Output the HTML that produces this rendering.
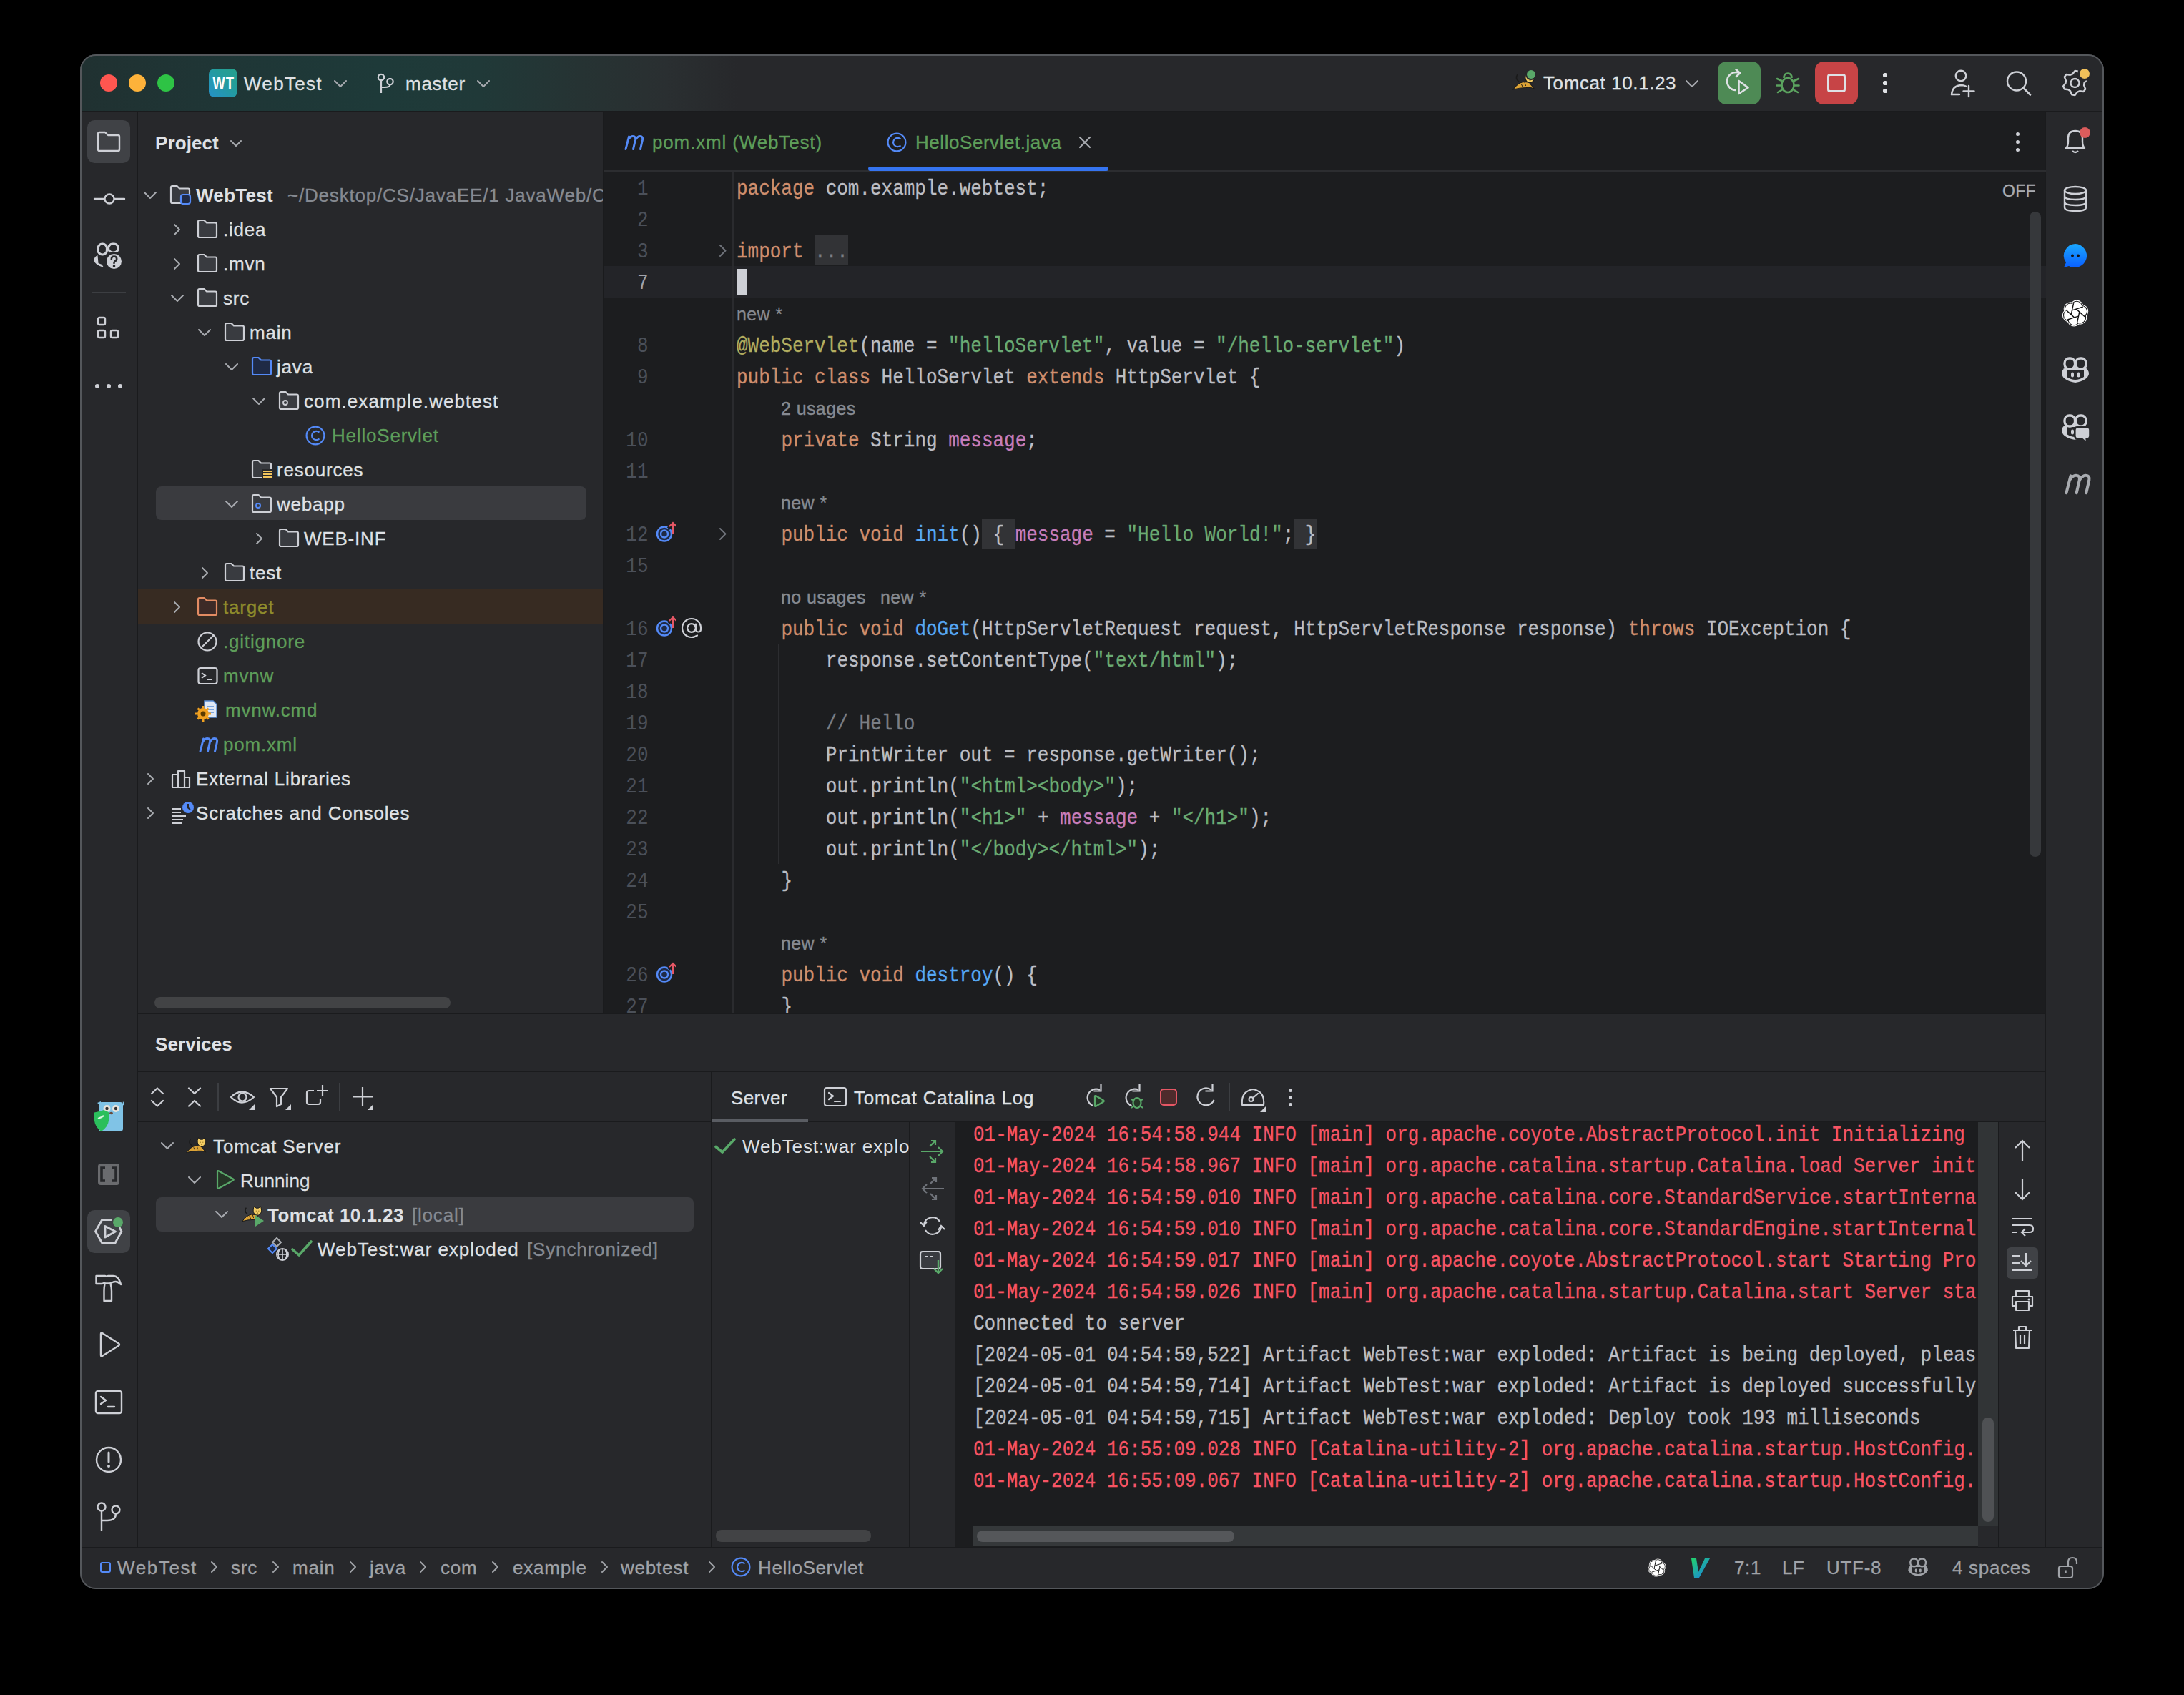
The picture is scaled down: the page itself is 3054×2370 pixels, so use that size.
<!DOCTYPE html><html><head><meta charset="utf-8"><style>
html,body{margin:0;padding:0;background:#000;width:3054px;height:2370px;overflow:hidden}
#r{position:absolute;left:0;top:0;width:3054px;height:2370px;background:#000;overflow:hidden}
#r div{position:absolute}
.t{white-space:pre}
</style></head><body><div id="r">
<div id="w" style="left:0;top:0;width:3054px;height:2370px;clip-path:inset(76px 112px 148px 112px round 22px)">
<div style="left:112px;top:76px;width:2830px;height:2146px;background:#27282b;"></div>
<div style="left:112px;top:76px;width:2830px;height:80px;background:linear-gradient(90deg,#203131 0px,#1f3636 200px,#1e3a39 420px,#203938 560px,#263333 700px,#2a2f31 820px,#27282b 920px);"></div>
<div style="left:844px;top:156px;width:2017px;height:1262px;background:#1c1d1f;"></div>
<div style="left:192px;top:156px;width:1px;height:2007px;background:#1a1b1d;"></div>
<div style="left:843px;top:156px;width:1px;height:1262px;background:#1a1b1d;"></div>
<div style="left:2860px;top:156px;width:1px;height:2007px;background:#1a1b1d;"></div>
<div style="left:193px;top:1417px;width:2667px;height:1px;background:#1a1b1d;"></div>
<div style="left:112px;top:2163px;width:2830px;height:1px;background:#1a1b1d;"></div>
<div style="left:112px;top:155px;width:2830px;height:2px;background:#1a1b1d;"></div>
<div style="left:140px;top:104px;width:24px;height:24px;border-radius:50%;background:#fe5650"></div>
<div style="left:180px;top:104px;width:24px;height:24px;border-radius:50%;background:#fdb23a"></div>
<div style="left:220px;top:104px;width:24px;height:24px;border-radius:50%;background:#2ec345"></div>
<div style="left:292px;top:96px;width:40px;height:40px;background:linear-gradient(45deg,#2591c9 0%,#239c9c 60%,#25a08a 100%);border-radius:8px"></div>
<div class="t" style="left:292px;top:96px;width:40px;height:40px;line-height:41px;text-align:center;font-family:'Liberation Sans';font-weight:700;font-size:25px;color:#fff;transform:scaleX(0.74);letter-spacing:1.5px">WT</div>
<div class="t" style="left:341px;top:103.99px;font-family:'Liberation Sans', sans-serif;font-size:26px;line-height:26px;color:#dfe1e5;font-weight:400;letter-spacing:1.3px;;-webkit-text-stroke:0.3px currentColor">WebTest</div>
<svg style="position:absolute;left:466.0px;top:111.0px;" width="20" height="12.0" viewBox="0 0 20 12.0" fill="none"><path d="M2 2 L10.0 10.0 L18 2" stroke="#a8abb0" stroke-width="2" stroke-linecap="round" stroke-linejoin="round"/></svg>
<svg style="position:absolute;left:524px;top:98px;" width="30" height="40" viewBox="0 0 30 40" fill="none"><circle cx="9" cy="10" r="4.2" stroke="#ced0d6" stroke-width="2.2"/><circle cx="21.5" cy="16" r="4.2" stroke="#ced0d6" stroke-width="2.2"/><path d="M9 14.2 V32 M9 24 H14 Q21.5 24 21.5 20.2" stroke="#ced0d6" stroke-width="2.2" fill="none"/></svg>
<div class="t" style="left:567px;top:103.99px;font-family:'Liberation Sans', sans-serif;font-size:26px;line-height:26px;color:#dfe1e5;font-weight:400;letter-spacing:0.75px;;-webkit-text-stroke:0.3px currentColor">master</div>
<svg style="position:absolute;left:666.0px;top:111.0px;" width="20" height="12.0" viewBox="0 0 20 12.0" fill="none"><path d="M2 2 L10.0 10.0 L18 2" stroke="#a8abb0" stroke-width="2" stroke-linecap="round" stroke-linejoin="round"/></svg>
<svg style="position:absolute;left:2115px;top:101px;transform:scale(1.0);transform-origin:0 0" width="32" height="26" viewBox="0 0 32 26" fill="none"><path d="M9 13 Q3 9 7 3" stroke="#1a1a1a" stroke-width="1.6" fill="none"/><path d="M1 24 Q7 15 15 13.5 L23 14 Q27 19 31 23.5 Q25 20.5 19 21.5 Q10 21.5 1 24 Z" fill="#dca336" stroke="#1a1a1a" stroke-width="1.1"/><path d="M12 16 L14 20 M17 14 L18.5 19" stroke="#1a1a1a" stroke-width="1"/><path d="M18 5 L19 1 L22.5 3.5 H26 L29.5 1 L30.5 5 Q32 11 26 14.5 Q20.5 15 18.8 11 Q17.5 8 18 5 Z" fill="#f2cc64" stroke="#1a1a1a" stroke-width="1.1"/><path d="M22 8 H23 M26 8 H27 M23.5 11 Q24.5 12 25.5 11" stroke="#5a4000" stroke-width="1"/></svg>
<div style="left:2133px;top:96px;width:16px;height:16px;border-radius:50%;background:#27282b"></div>
<div style="left:2135px;top:98px;width:12px;height:12px;border-radius:50%;background:#59a869"></div>
<div class="t" style="left:2158px;top:102.99px;font-family:'Liberation Sans', sans-serif;font-size:26px;line-height:26px;color:#dfe1e5;font-weight:400;letter-spacing:0.6px;;-webkit-text-stroke:0.3px currentColor">Tomcat 10.1.23</div>
<svg style="position:absolute;left:2356.0px;top:111.0px;" width="20" height="12.0" viewBox="0 0 20 12.0" fill="none"><path d="M2 2 L10.0 10.0 L18 2" stroke="#a8abb0" stroke-width="2" stroke-linecap="round" stroke-linejoin="round"/></svg>
<div style="left:2402px;top:86px;width:60px;height:60px;background:#4e8a55;border-radius:12px"></div>
<svg style="position:absolute;left:2412px;top:96px;" width="40" height="40" viewBox="0 0 40 40" fill="none"><path d="M19.8 5.75 A12.5 12.5 0 1 0 14.4 29.95" stroke="#dfe1e5" stroke-width="2.6" fill="none" stroke-linecap="round"/><path d="M15.5 1 L21 6 L16 11" stroke="#dfe1e5" stroke-width="2.6" fill="none" stroke-linecap="round" stroke-linejoin="round"/><path d="M19.5 17 L32.5 26.5 L19.5 35 Z" stroke="#dfe1e5" stroke-width="2.6" fill="none" stroke-linejoin="round"/></svg>
<svg style="position:absolute;left:2482px;top:96px;" width="36" height="40" viewBox="0 0 36 40" fill="none"><ellipse cx="18" cy="23" rx="8.5" ry="10" stroke="#5ba35f" stroke-width="2.6"/><path d="M12.5 13 Q12.5 6.5 18 6.5 Q23.5 6.5 23.5 13" stroke="#5ba35f" stroke-width="2.6" fill="none"/><path d="M3 14 L9.5 17 M33 14 L26.5 17 M2.5 23.5 H9.5 M33.5 23.5 H26.5 M4 33 L10 29.5 M32 33 L26 29.5" stroke="#5ba35f" stroke-width="2.6" stroke-linecap="round"/></svg>
<div style="left:2538px;top:86px;width:60px;height:60px;background:#c74446;border-radius:12px"></div>
<div style="left:2555px;top:103px;width:26px;height:26px;background:transparent;border:3px solid #dfe1e5;border-radius:4px;box-sizing:border-box"></div>
<div style="left:2633.4px;top:102.4px;width:5.2px;height:5.2px;border-radius:50%;background:#dfe1e5"></div>
<div style="left:2633.4px;top:113.4px;width:5.2px;height:5.2px;border-radius:50%;background:#dfe1e5"></div>
<div style="left:2633.4px;top:124.4px;width:5.2px;height:5.2px;border-radius:50%;background:#dfe1e5"></div>
<svg style="position:absolute;left:2722px;top:93px;" width="40" height="44" viewBox="0 0 40 44" fill="none"><circle cx="20" cy="13" r="7.2" stroke="#ced0d6" stroke-width="2.4"/><path d="M7 39 Q8 27 20 26 Q24 26 27 27.5" stroke="#ced0d6" stroke-width="2.4" fill="none" stroke-linecap="round"/><path d="M7 39 H18 M31 27 V42 M23.5 34.5 H38.5" stroke="#ced0d6" stroke-width="2.4" stroke-linecap="round"/></svg>
<svg style="position:absolute;left:2800px;top:93px;" width="44" height="44" viewBox="0 0 44 44" fill="none"><circle cx="20" cy="20.5" r="13" stroke="#ced0d6" stroke-width="2.4"/><path d="M29.5 30 L39 39.5" stroke="#ced0d6" stroke-width="2.6" stroke-linecap="round"/></svg>
<svg style="position:absolute;left:2880px;top:95px;" width="44" height="44" viewBox="0 0 44 44" fill="none"><path d="M21.5 4.0 L25.9 4.6 L28.0 9.7 L30.7 11.8 L36.2 12.5 L37.9 16.6 L34.5 21.0 L34.1 24.4 L36.2 29.5 L33.5 33.0 L28.0 32.3 L24.9 33.6 L21.5 38.0 L17.1 37.4 L15.0 32.3 L12.3 30.2 L6.8 29.5 L5.1 25.4 L8.5 21.0 L8.9 17.6 L6.8 12.5 L9.5 9.0 L15.0 9.7 L18.1 8.4 Z" stroke="#ced0d6" stroke-width="2.4" stroke-linejoin="round"/><circle cx="21.5" cy="21" r="6" stroke="#ced0d6" stroke-width="2.4"/></svg>
<div style="left:2905px;top:93px;width:20px;height:20px;border-radius:50%;background:#27282b"></div>
<div style="left:2908px;top:96px;width:14px;height:14px;border-radius:50%;background:#f0c05a"></div>
<div style="left:122px;top:168px;width:60px;height:60px;background:#404246;border-radius:10px"></div>
<svg style="position:absolute;left:134px;top:182px;" width="36" height="32" viewBox="0 0 36 32" fill="none"><path d="M3 5 Q3 3 5 3 H13 L17 7 H31 Q33 7 33 9 V27 Q33 29 31 29 H5 Q3 29 3 27 Z" stroke="#ced0d6" stroke-width="2.4" stroke-linejoin="round"/></svg>
<svg style="position:absolute;left:130px;top:266px;" width="46" height="24" viewBox="0 0 46 24" fill="none"><circle cx="23" cy="12" r="6.5" stroke="#ced0d6" stroke-width="2.4"/><path d="M2 12 H16 M30 12 H44" stroke="#ced0d6" stroke-width="2.4" stroke-linecap="round"/></svg>
<svg style="position:absolute;left:130px;top:336px;" width="42" height="42" viewBox="0 0 42 42" fill="none"><rect x="7" y="5" width="12.5" height="15" rx="6" stroke="#ced0d6" stroke-width="3.2"/><rect x="21.5" y="5" width="14" height="12" rx="6" stroke="#ced0d6" stroke-width="3.2"/><path d="M6.5 21 Q1.5 23 1.5 28 Q2 34 15 38 L12.5 34 L7.5 32 Z" fill="#ced0d6"/><circle cx="29.5" cy="29.5" r="13.5" fill="#27282b"/><circle cx="29.5" cy="29.5" r="10.5" fill="#ced0d6"/><path d="M25.8 26.5 Q25.8 22.5 29.5 22.5 Q33.2 22.5 33.2 26 Q33.2 28 30.5 29.5 Q29.5 30.2 29.5 32" stroke="#27282b" stroke-width="2.6" fill="none" stroke-linecap="round"/><circle cx="29.5" cy="36" r="1.8" fill="#27282b"/></svg>
<div style="left:128px;top:408px;width:48px;height:2px;background:#3c3e42;"></div>
<svg style="position:absolute;left:132px;top:440px;" width="40" height="40" viewBox="0 0 40 40" fill="none"><rect x="5" y="4" width="10" height="10" rx="2" stroke="#ced0d6" stroke-width="2.4"/><rect x="5" y="22" width="10" height="10" rx="2" stroke="#ced0d6" stroke-width="2.4"/><rect x="23" y="22" width="10" height="10" rx="2" stroke="#ced0d6" stroke-width="2.4"/></svg>
<div style="left:133px;top:537px;width:6px;height:6px;border-radius:50%;background:#ced0d6"></div>
<div style="left:149px;top:537px;width:6px;height:6px;border-radius:50%;background:#ced0d6"></div>
<div style="left:165px;top:537px;width:6px;height:6px;border-radius:50%;background:#ced0d6"></div>
<div class="t" style="left:217px;top:186.99px;font-family:'Liberation Sans', sans-serif;font-size:26px;line-height:26px;color:#dfe1e5;font-weight:700;letter-spacing:0.1px;">Project</div>
<svg style="position:absolute;left:321.0px;top:194.5px;" width="18" height="11.0" viewBox="0 0 18 11.0" fill="none"><path d="M2 2 L9.0 9.0 L16 2" stroke="#a8abb0" stroke-width="2" stroke-linecap="round" stroke-linejoin="round"/></svg>
<div style="left:218px;top:680px;width:602px;height:47px;background:#3a3b3f;border-radius:8px"></div>
<div style="left:193px;top:824px;width:650px;height:48px;background:#372b22;"></div>
<svg style="position:absolute;left:200.0px;top:267.0px;" width="20" height="12.0" viewBox="0 0 20 12.0" fill="none"><path d="M2 2 L10.0 10.0 L18 2" stroke="#a8abb0" stroke-width="2" stroke-linecap="round" stroke-linejoin="round"/></svg>
<svg style="position:absolute;left:236px;top:257px;" width="32" height="30" viewBox="0 0 32 30" fill="none"><path d="M3 5 Q3 3 5 3 H11.5 L15 6.5 H27 Q29 6.5 29 8.5 V25 Q29 27 27 27 H5 Q3 27 3 25 Z" fill="#393b40" stroke="#ced0d6" stroke-width="2.2" stroke-linejoin="round"/><rect x="17" y="15" width="13" height="13" rx="3" fill="#1f2a45" stroke="#548af7" stroke-width="2.2"/></svg>
<div class="t" style="left:274px;top:259.99px;font-family:'Liberation Sans', sans-serif;font-size:26px;line-height:26px;color:#dfe1e5;font-weight:700;letter-spacing:0.3px;">WebTest</div>
<div style="left:400px;top:250px;width:443px;height:48px;overflow:hidden">
<div class="t" style="left:2px;top:9.99px;font-family:'Liberation Sans', sans-serif;font-size:26px;line-height:26px;color:#868a91;font-weight:400;letter-spacing:0.8px;;-webkit-text-stroke:0.3px currentColor">~/Desktop/CS/JavaEE/1 JavaWeb/C</div>
</div>
<svg style="position:absolute;left:241.5px;top:312.0px;" width="11.0" height="18" viewBox="0 0 11.0 18" fill="none"><path d="M2 2 L9.0 9.0 L2 16" stroke="#a8abb0" stroke-width="2" stroke-linecap="round" stroke-linejoin="round"/></svg>
<svg style="position:absolute;left:274px;top:305px;" width="32" height="30" viewBox="0 0 32 30" fill="none"><path d="M3 5 Q3 3 5 3 H11.5 L15 6.5 H27 Q29 6.5 29 8.5 V25 Q29 27 27 27 H5 Q3 27 3 25 Z" fill="#393b40" stroke="#ced0d6" stroke-width="2.2" stroke-linejoin="round"/></svg>
<div class="t" style="left:312px;top:307.99px;font-family:'Liberation Sans', sans-serif;font-size:26px;line-height:26px;color:#dfe1e5;font-weight:400;letter-spacing:0.8px;;-webkit-text-stroke:0.3px currentColor">.idea</div>
<svg style="position:absolute;left:241.5px;top:360.0px;" width="11.0" height="18" viewBox="0 0 11.0 18" fill="none"><path d="M2 2 L9.0 9.0 L2 16" stroke="#a8abb0" stroke-width="2" stroke-linecap="round" stroke-linejoin="round"/></svg>
<svg style="position:absolute;left:274px;top:353px;" width="32" height="30" viewBox="0 0 32 30" fill="none"><path d="M3 5 Q3 3 5 3 H11.5 L15 6.5 H27 Q29 6.5 29 8.5 V25 Q29 27 27 27 H5 Q3 27 3 25 Z" fill="#393b40" stroke="#ced0d6" stroke-width="2.2" stroke-linejoin="round"/></svg>
<div class="t" style="left:312px;top:355.99px;font-family:'Liberation Sans', sans-serif;font-size:26px;line-height:26px;color:#dfe1e5;font-weight:400;letter-spacing:0.8px;;-webkit-text-stroke:0.3px currentColor">.mvn</div>
<svg style="position:absolute;left:238.0px;top:411.0px;" width="20" height="12.0" viewBox="0 0 20 12.0" fill="none"><path d="M2 2 L10.0 10.0 L18 2" stroke="#a8abb0" stroke-width="2" stroke-linecap="round" stroke-linejoin="round"/></svg>
<svg style="position:absolute;left:274px;top:401px;" width="32" height="30" viewBox="0 0 32 30" fill="none"><path d="M3 5 Q3 3 5 3 H11.5 L15 6.5 H27 Q29 6.5 29 8.5 V25 Q29 27 27 27 H5 Q3 27 3 25 Z" fill="#393b40" stroke="#ced0d6" stroke-width="2.2" stroke-linejoin="round"/></svg>
<div class="t" style="left:312px;top:403.99px;font-family:'Liberation Sans', sans-serif;font-size:26px;line-height:26px;color:#dfe1e5;font-weight:400;letter-spacing:0.8px;;-webkit-text-stroke:0.3px currentColor">src</div>
<svg style="position:absolute;left:276.0px;top:459.0px;" width="20" height="12.0" viewBox="0 0 20 12.0" fill="none"><path d="M2 2 L10.0 10.0 L18 2" stroke="#a8abb0" stroke-width="2" stroke-linecap="round" stroke-linejoin="round"/></svg>
<svg style="position:absolute;left:312px;top:449px;" width="32" height="30" viewBox="0 0 32 30" fill="none"><path d="M3 5 Q3 3 5 3 H11.5 L15 6.5 H27 Q29 6.5 29 8.5 V25 Q29 27 27 27 H5 Q3 27 3 25 Z" fill="#393b40" stroke="#ced0d6" stroke-width="2.2" stroke-linejoin="round"/></svg>
<div class="t" style="left:349px;top:451.99px;font-family:'Liberation Sans', sans-serif;font-size:26px;line-height:26px;color:#dfe1e5;font-weight:400;letter-spacing:0.8px;;-webkit-text-stroke:0.3px currentColor">main</div>
<svg style="position:absolute;left:314.0px;top:507.0px;" width="20" height="12.0" viewBox="0 0 20 12.0" fill="none"><path d="M2 2 L10.0 10.0 L18 2" stroke="#a8abb0" stroke-width="2" stroke-linecap="round" stroke-linejoin="round"/></svg>
<svg style="position:absolute;left:350px;top:497px;" width="32" height="30" viewBox="0 0 32 30" fill="none"><path d="M3 5 Q3 3 5 3 H11.5 L15 6.5 H27 Q29 6.5 29 8.5 V25 Q29 27 27 27 H5 Q3 27 3 25 Z" fill="#1f2a45" stroke="#548af7" stroke-width="2.2" stroke-linejoin="round"/></svg>
<div class="t" style="left:387px;top:499.99px;font-family:'Liberation Sans', sans-serif;font-size:26px;line-height:26px;color:#dfe1e5;font-weight:400;letter-spacing:0.8px;;-webkit-text-stroke:0.3px currentColor">java</div>
<svg style="position:absolute;left:352.0px;top:555.0px;" width="20" height="12.0" viewBox="0 0 20 12.0" fill="none"><path d="M2 2 L10.0 10.0 L18 2" stroke="#a8abb0" stroke-width="2" stroke-linecap="round" stroke-linejoin="round"/></svg>
<svg style="position:absolute;left:388px;top:545px;" width="32" height="30" viewBox="0 0 32 30" fill="none"><path d="M3 5 Q3 3 5 3 H11.5 L15 6.5 H27 Q29 6.5 29 8.5 V25 Q29 27 27 27 H5 Q3 27 3 25 Z" fill="#393b40" stroke="#ced0d6" stroke-width="2.2" stroke-linejoin="round"/><circle cx="11" cy="18" r="3" stroke="#ced0d6" stroke-width="1.8"/></svg>
<div class="t" style="left:425px;top:547.99px;font-family:'Liberation Sans', sans-serif;font-size:26px;line-height:26px;color:#dfe1e5;font-weight:400;letter-spacing:1.1px;;-webkit-text-stroke:0.3px currentColor">com.example.webtest</div>
<svg style="position:absolute;left:427px;top:595.0px;" width="28" height="28" viewBox="0 0 28 28" fill="none"><circle cx="14.0" cy="14.0" r="12.4" stroke="#548af7" stroke-width="2.2"/><path d="M19.5 9.5 A6.2 6.2 0 1 0 19.5 18.5" stroke="#548af7" stroke-width="2.2" fill="none"/></svg>
<div class="t" style="left:464px;top:595.99px;font-family:'Liberation Sans', sans-serif;font-size:26px;line-height:26px;color:#5e9e5a;font-weight:400;letter-spacing:0.8px;;-webkit-text-stroke:0.3px currentColor">HelloServlet</div>
<svg style="position:absolute;left:350px;top:641px;" width="32" height="30" viewBox="0 0 32 30" fill="none"><path d="M3 5 Q3 3 5 3 H11.5 L15 6.5 H27 Q29 6.5 29 8.5 V25 Q29 27 27 27 H5 Q3 27 3 25 Z" fill="#393b40" stroke="#ced0d6" stroke-width="2.2" stroke-linejoin="round"/><rect x="16" y="15" width="15" height="13" fill="#27282b"/><path d="M18 18 H30 M18 22 H30 M18 26 H30" stroke="#f2c55c" stroke-width="2"/></svg>
<div class="t" style="left:387px;top:643.99px;font-family:'Liberation Sans', sans-serif;font-size:26px;line-height:26px;color:#dfe1e5;font-weight:400;letter-spacing:0.8px;;-webkit-text-stroke:0.3px currentColor">resources</div>
<svg style="position:absolute;left:314.0px;top:699.0px;" width="20" height="12.0" viewBox="0 0 20 12.0" fill="none"><path d="M2 2 L10.0 10.0 L18 2" stroke="#a8abb0" stroke-width="2" stroke-linecap="round" stroke-linejoin="round"/></svg>
<svg style="position:absolute;left:350px;top:689px;" width="32" height="30" viewBox="0 0 32 30" fill="none"><path d="M3 5 Q3 3 5 3 H11.5 L15 6.5 H27 Q29 6.5 29 8.5 V25 Q29 27 27 27 H5 Q3 27 3 25 Z" fill="#393b40" stroke="#ced0d6" stroke-width="2.2" stroke-linejoin="round"/><circle cx="11" cy="18" r="3" stroke="#548af7" stroke-width="2"/></svg>
<div class="t" style="left:387px;top:691.99px;font-family:'Liberation Sans', sans-serif;font-size:26px;line-height:26px;color:#dfe1e5;font-weight:400;letter-spacing:0.8px;;-webkit-text-stroke:0.3px currentColor">webapp</div>
<svg style="position:absolute;left:356.5px;top:744.0px;" width="11.0" height="18" viewBox="0 0 11.0 18" fill="none"><path d="M2 2 L9.0 9.0 L2 16" stroke="#a8abb0" stroke-width="2" stroke-linecap="round" stroke-linejoin="round"/></svg>
<svg style="position:absolute;left:388px;top:737px;" width="32" height="30" viewBox="0 0 32 30" fill="none"><path d="M3 5 Q3 3 5 3 H11.5 L15 6.5 H27 Q29 6.5 29 8.5 V25 Q29 27 27 27 H5 Q3 27 3 25 Z" fill="#393b40" stroke="#ced0d6" stroke-width="2.2" stroke-linejoin="round"/></svg>
<div class="t" style="left:425px;top:739.99px;font-family:'Liberation Sans', sans-serif;font-size:26px;line-height:26px;color:#dfe1e5;font-weight:400;letter-spacing:0.8px;;-webkit-text-stroke:0.3px currentColor">WEB-INF</div>
<svg style="position:absolute;left:280.5px;top:792.0px;" width="11.0" height="18" viewBox="0 0 11.0 18" fill="none"><path d="M2 2 L9.0 9.0 L2 16" stroke="#a8abb0" stroke-width="2" stroke-linecap="round" stroke-linejoin="round"/></svg>
<svg style="position:absolute;left:312px;top:785px;" width="32" height="30" viewBox="0 0 32 30" fill="none"><path d="M3 5 Q3 3 5 3 H11.5 L15 6.5 H27 Q29 6.5 29 8.5 V25 Q29 27 27 27 H5 Q3 27 3 25 Z" fill="#393b40" stroke="#ced0d6" stroke-width="2.2" stroke-linejoin="round"/></svg>
<div class="t" style="left:349px;top:787.99px;font-family:'Liberation Sans', sans-serif;font-size:26px;line-height:26px;color:#dfe1e5;font-weight:400;letter-spacing:0.8px;;-webkit-text-stroke:0.3px currentColor">test</div>
<svg style="position:absolute;left:241.5px;top:840.0px;" width="11.0" height="18" viewBox="0 0 11.0 18" fill="none"><path d="M2 2 L9.0 9.0 L2 16" stroke="#a8abb0" stroke-width="2" stroke-linecap="round" stroke-linejoin="round"/></svg>
<svg style="position:absolute;left:274px;top:833px;" width="32" height="30" viewBox="0 0 32 30" fill="none"><path d="M3 5 Q3 3 5 3 H11.5 L15 6.5 H27 Q29 6.5 29 8.5 V25 Q29 27 27 27 H5 Q3 27 3 25 Z" fill="#3d2a27" stroke="#e38c63" stroke-width="2.2" stroke-linejoin="round"/></svg>
<div class="t" style="left:312px;top:835.99px;font-family:'Liberation Sans', sans-serif;font-size:26px;line-height:26px;color:#8f8c2c;font-weight:400;letter-spacing:0.8px;;-webkit-text-stroke:0.3px currentColor">target</div>
<svg style="position:absolute;left:275px;top:882px;" width="30" height="30" viewBox="0 0 30 30" fill="none"><circle cx="15" cy="15" r="12.5" stroke="#ced0d6" stroke-width="2.2"/><path d="M6.5 23.5 L23.5 6.5" stroke="#ced0d6" stroke-width="2.2"/></svg>
<div class="t" style="left:312px;top:883.99px;font-family:'Liberation Sans', sans-serif;font-size:26px;line-height:26px;color:#5e9e5a;font-weight:400;letter-spacing:0.8px;;-webkit-text-stroke:0.3px currentColor">.gitignore</div>
<svg style="position:absolute;left:275px;top:930px;" width="30" height="30" viewBox="0 0 30 30" fill="none"><rect x="2.5" y="4" width="26" height="22" rx="3" stroke="#ced0d6" stroke-width="2.2"/><path d="M7 11 L12 14.5 L7 18 M14 20 H22" stroke="#ced0d6" stroke-width="2"/></svg>
<div class="t" style="left:312px;top:931.99px;font-family:'Liberation Sans', sans-serif;font-size:26px;line-height:26px;color:#5e9e5a;font-weight:400;letter-spacing:0.8px;;-webkit-text-stroke:0.3px currentColor">mvnw</div>
<svg style="position:absolute;left:272px;top:976px;" width="34" height="34" viewBox="0 0 34 34" fill="none"><path d="M14 4 H26 L31 9 V27 H14 Z" fill="#dfe8f5" stroke="#5a8fd8" stroke-width="1.5"/><path d="M17 12 H27 M17 16 H27 M17 20 H27" stroke="#5a8fd8" stroke-width="1.5"/><circle cx="12" cy="22" r="8" fill="#f0a020"/><circle cx="12" cy="22" r="3.5" fill="#5a3b00"/><path d="M12 11 V14 M12 30 V33 M1 22 H4 M20 22 H23 M4.5 14.5 L6.5 16.5 M17.5 27.5 L19.5 29.5 M4.5 29.5 L6.5 27.5 M17.5 16.5 L19.5 14.5" stroke="#f0a020" stroke-width="3"/></svg>
<div class="t" style="left:315px;top:979.99px;font-family:'Liberation Sans', sans-serif;font-size:26px;line-height:26px;color:#5e9e5a;font-weight:400;letter-spacing:0.8px;;-webkit-text-stroke:0.3px currentColor">mvnw.cmd</div>
<svg style="position:absolute;left:276px;top:1029.0px;" width="32.0" height="24.0" viewBox="0 0 32 24" fill="none"><path d="M4 21.5 L8.5 4 M7.6 8 Q10.5 3.5 14 3.5 Q18.5 3.5 17.5 8.5 L14.5 21.5 M17.5 8.5 Q20.5 3.5 24 3.5 Q28.5 3.5 27.5 8.5 L24.5 21.5" stroke="#548af7" stroke-width="3" stroke-linecap="round" stroke-linejoin="round" fill="none"/></svg>
<div class="t" style="left:312px;top:1027.99px;font-family:'Liberation Sans', sans-serif;font-size:26px;line-height:26px;color:#5e9e5a;font-weight:400;letter-spacing:0.8px;;-webkit-text-stroke:0.3px currentColor">pom.xml</div>
<svg style="position:absolute;left:204.5px;top:1080.0px;" width="11.0" height="18" viewBox="0 0 11.0 18" fill="none"><path d="M2 2 L9.0 9.0 L2 16" stroke="#a8abb0" stroke-width="2" stroke-linecap="round" stroke-linejoin="round"/></svg>
<svg style="position:absolute;left:238px;top:1074px;" width="30" height="30" viewBox="0 0 30 30" fill="none"><path d="M3 27 H27 V13 H20 V27 M3 27 V9 H11 V27 M11 27 V4 H20 V13" stroke="#ced0d6" stroke-width="2.2" stroke-linejoin="round" fill="none"/></svg>
<div class="t" style="left:274px;top:1075.99px;font-family:'Liberation Sans', sans-serif;font-size:26px;line-height:26px;color:#dfe1e5;font-weight:400;letter-spacing:0.8px;;-webkit-text-stroke:0.3px currentColor">External Libraries</div>
<svg style="position:absolute;left:204.5px;top:1128.0px;" width="11.0" height="18" viewBox="0 0 11.0 18" fill="none"><path d="M2 2 L9.0 9.0 L2 16" stroke="#a8abb0" stroke-width="2" stroke-linecap="round" stroke-linejoin="round"/></svg>
<svg style="position:absolute;left:238px;top:1120px;" width="34" height="34" viewBox="0 0 34 34" fill="none"><path d="M3 11 H15 M3 16 H15 M3 21 H22 M3 26 H18 M3 31 H16" stroke="#ced0d6" stroke-width="2"/><circle cx="25" cy="9" r="8" fill="#548af7"/><path d="M25 4 V9.5 L28 12" stroke="#27282b" stroke-width="2" fill="none"/></svg>
<div class="t" style="left:274px;top:1123.99px;font-family:'Liberation Sans', sans-serif;font-size:26px;line-height:26px;color:#dfe1e5;font-weight:400;letter-spacing:0.8px;;-webkit-text-stroke:0.3px currentColor">Scratches and Consoles</div>
<div style="left:843px;top:156px;width:1px;height:1262px;background:#1a1b1d;"></div>
<div style="left:216px;top:1394px;width:414px;height:16px;background:#424345;border-radius:8px"></div>
<div style="left:844px;top:238px;width:2017px;height:2px;background:#2c2d30;"></div>
<svg style="position:absolute;left:871px;top:187.0px;" width="32.0" height="24.0" viewBox="0 0 32 24" fill="none"><path d="M4 21.5 L8.5 4 M7.6 8 Q10.5 3.5 14 3.5 Q18.5 3.5 17.5 8.5 L14.5 21.5 M17.5 8.5 Q20.5 3.5 24 3.5 Q28.5 3.5 27.5 8.5 L24.5 21.5" stroke="#548af7" stroke-width="3" stroke-linecap="round" stroke-linejoin="round" fill="none"/></svg>
<div class="t" style="left:912px;top:185.99px;font-family:'Liberation Sans', sans-serif;font-size:26px;line-height:26px;color:#5e9e5a;font-weight:400;letter-spacing:0.85px;;-webkit-text-stroke:0.3px currentColor">pom.xml (WebTest)</div>
<svg style="position:absolute;left:1240px;top:185.0px;" width="28" height="28" viewBox="0 0 28 28" fill="none"><circle cx="14.0" cy="14.0" r="12.4" stroke="#548af7" stroke-width="2.2"/><path d="M19.5 9.5 A6.2 6.2 0 1 0 19.5 18.5" stroke="#548af7" stroke-width="2.2" fill="none"/></svg>
<div class="t" style="left:1280px;top:185.99px;font-family:'Liberation Sans', sans-serif;font-size:26px;line-height:26px;color:#5e9e5a;font-weight:400;letter-spacing:0.55px;;-webkit-text-stroke:0.3px currentColor">HelloServlet.java</div>
<svg style="position:absolute;left:1507px;top:189px;" width="20" height="20" viewBox="0 0 20 20" fill="none"><path d="M3 3 L17 17 M17 3 L3 17" stroke="#a8abb0" stroke-width="2.2" stroke-linecap="round"/></svg>
<div style="left:1214px;top:233px;width:336px;height:6px;background:#3574f0;border-radius:3px"></div>
<div style="left:2818.5px;top:184.5px;width:5px;height:5px;border-radius:50%;background:#ced0d6"></div>
<div style="left:2818.5px;top:195.5px;width:5px;height:5px;border-radius:50%;background:#ced0d6"></div>
<div style="left:2818.5px;top:206.5px;width:5px;height:5px;border-radius:50%;background:#ced0d6"></div>
<div style="left:844px;top:372px;width:2017px;height:44px;background:#232428;"></div>
<div style="left:1024px;top:240px;width:2px;height:1178px;background:#2a2b2e;"></div>
<div style="left:1139.2px;top:329px;width:46.8px;height:42px;background:#323336;"></div>
<div style="left:1373.2px;top:725px;width:46.8px;height:42px;background:#323336;"></div>
<div style="left:1810.0px;top:725px;width:31.2px;height:42px;background:#323336;"></div>
<div class="t" style="left:890.9px;top:252.08px;font-family:'Liberation Mono', monospace;font-size:26px;line-height:26px;color:#4b5059;transform:scaleY(1.1);transform-origin:0 19.92px">1</div>
<div class="t" style="left:1030.0px;top:252.08px;font-family:'Liberation Mono', monospace;font-size:26px;line-height:26px;color:#bcbec4;font-weight:400;letter-spacing:0px;;transform:scaleY(1.1);transform-origin:0 19.92px;-webkit-text-stroke:0.3px currentColor;letter-spacing:-0.02px"><span style="color:#cf8e6d">package</span><span style="color:#bcbec4"> com.example.webtest;</span></div>
<div class="t" style="left:890.9px;top:296.08px;font-family:'Liberation Mono', monospace;font-size:26px;line-height:26px;color:#4b5059;transform:scaleY(1.1);transform-origin:0 19.92px">2</div>
<div class="t" style="left:890.9px;top:340.08px;font-family:'Liberation Mono', monospace;font-size:26px;line-height:26px;color:#4b5059;transform:scaleY(1.1);transform-origin:0 19.92px">3</div>
<div class="t" style="left:1030.0px;top:340.08px;font-family:'Liberation Mono', monospace;font-size:26px;line-height:26px;color:#bcbec4;font-weight:400;letter-spacing:0px;;transform:scaleY(1.1);transform-origin:0 19.92px;-webkit-text-stroke:0.3px currentColor;letter-spacing:-0.02px"><span style="color:#cf8e6d">import</span><span style="color:#bcbec4"> </span><span style="color:#7a7e85">...</span></div>
<div class="t" style="left:890.9px;top:384.08px;font-family:'Liberation Mono', monospace;font-size:26px;line-height:26px;color:#a1a3ab;transform:scaleY(1.1);transform-origin:0 19.92px">7</div>
<div class="t" style="left:890.9px;top:472.08px;font-family:'Liberation Mono', monospace;font-size:26px;line-height:26px;color:#4b5059;transform:scaleY(1.1);transform-origin:0 19.92px">8</div>
<div class="t" style="left:1030.0px;top:472.08px;font-family:'Liberation Mono', monospace;font-size:26px;line-height:26px;color:#bcbec4;font-weight:400;letter-spacing:0px;;transform:scaleY(1.1);transform-origin:0 19.92px;-webkit-text-stroke:0.3px currentColor;letter-spacing:-0.02px"><span style="color:#b3ae60">@WebServlet</span><span style="color:#bcbec4">(name = </span><span style="color:#6aab73">"helloServlet"</span><span style="color:#bcbec4">, value = </span><span style="color:#6aab73">"/hello-servlet"</span><span style="color:#bcbec4">)</span></div>
<div class="t" style="left:890.9px;top:516.08px;font-family:'Liberation Mono', monospace;font-size:26px;line-height:26px;color:#4b5059;transform:scaleY(1.1);transform-origin:0 19.92px">9</div>
<div class="t" style="left:1030.0px;top:516.08px;font-family:'Liberation Mono', monospace;font-size:26px;line-height:26px;color:#bcbec4;font-weight:400;letter-spacing:0px;;transform:scaleY(1.1);transform-origin:0 19.92px;-webkit-text-stroke:0.3px currentColor;letter-spacing:-0.02px"><span style="color:#cf8e6d">public</span><span style="color:#bcbec4"> </span><span style="color:#cf8e6d">class</span><span style="color:#bcbec4"> HelloServlet </span><span style="color:#cf8e6d">extends</span><span style="color:#bcbec4"> HttpServlet {</span></div>
<div class="t" style="left:875.3px;top:604.08px;font-family:'Liberation Mono', monospace;font-size:26px;line-height:26px;color:#4b5059;transform:scaleY(1.1);transform-origin:0 19.92px">10</div>
<div class="t" style="left:1092.4px;top:604.08px;font-family:'Liberation Mono', monospace;font-size:26px;line-height:26px;color:#bcbec4;font-weight:400;letter-spacing:0px;;transform:scaleY(1.1);transform-origin:0 19.92px;-webkit-text-stroke:0.3px currentColor;letter-spacing:-0.02px"><span style="color:#cf8e6d">private</span><span style="color:#bcbec4"> String </span><span style="color:#c77dbb">message</span><span style="color:#bcbec4">;</span></div>
<div class="t" style="left:875.3px;top:648.08px;font-family:'Liberation Mono', monospace;font-size:26px;line-height:26px;color:#4b5059;transform:scaleY(1.1);transform-origin:0 19.92px">11</div>
<div class="t" style="left:875.3px;top:736.08px;font-family:'Liberation Mono', monospace;font-size:26px;line-height:26px;color:#4b5059;transform:scaleY(1.1);transform-origin:0 19.92px">12</div>
<div class="t" style="left:1092.4px;top:736.08px;font-family:'Liberation Mono', monospace;font-size:26px;line-height:26px;color:#bcbec4;font-weight:400;letter-spacing:0px;;transform:scaleY(1.1);transform-origin:0 19.92px;-webkit-text-stroke:0.3px currentColor;letter-spacing:-0.02px"><span style="color:#cf8e6d">public</span><span style="color:#bcbec4"> </span><span style="color:#cf8e6d">void</span><span style="color:#bcbec4"> </span><span style="color:#56a8f5">init</span><span style="color:#bcbec4">() { </span><span style="color:#c77dbb">message</span><span style="color:#bcbec4"> = </span><span style="color:#6aab73">"Hello World!"</span><span style="color:#bcbec4">; }</span></div>
<div class="t" style="left:875.3px;top:780.08px;font-family:'Liberation Mono', monospace;font-size:26px;line-height:26px;color:#4b5059;transform:scaleY(1.1);transform-origin:0 19.92px">15</div>
<div class="t" style="left:875.3px;top:868.08px;font-family:'Liberation Mono', monospace;font-size:26px;line-height:26px;color:#4b5059;transform:scaleY(1.1);transform-origin:0 19.92px">16</div>
<div class="t" style="left:1092.4px;top:868.08px;font-family:'Liberation Mono', monospace;font-size:26px;line-height:26px;color:#bcbec4;font-weight:400;letter-spacing:0px;;transform:scaleY(1.1);transform-origin:0 19.92px;-webkit-text-stroke:0.3px currentColor;letter-spacing:-0.02px"><span style="color:#cf8e6d">public</span><span style="color:#bcbec4"> </span><span style="color:#cf8e6d">void</span><span style="color:#bcbec4"> </span><span style="color:#56a8f5">doGet</span><span style="color:#bcbec4">(HttpServletRequest request, HttpServletResponse response) </span><span style="color:#cf8e6d">throws</span><span style="color:#bcbec4"> IOException {</span></div>
<div class="t" style="left:875.3px;top:912.08px;font-family:'Liberation Mono', monospace;font-size:26px;line-height:26px;color:#4b5059;transform:scaleY(1.1);transform-origin:0 19.92px">17</div>
<div class="t" style="left:1154.8px;top:912.08px;font-family:'Liberation Mono', monospace;font-size:26px;line-height:26px;color:#bcbec4;font-weight:400;letter-spacing:0px;;transform:scaleY(1.1);transform-origin:0 19.92px;-webkit-text-stroke:0.3px currentColor;letter-spacing:-0.02px"><span style="color:#bcbec4">response.setContentType(</span><span style="color:#6aab73">"text/html"</span><span style="color:#bcbec4">);</span></div>
<div class="t" style="left:875.3px;top:956.08px;font-family:'Liberation Mono', monospace;font-size:26px;line-height:26px;color:#4b5059;transform:scaleY(1.1);transform-origin:0 19.92px">18</div>
<div class="t" style="left:875.3px;top:1000.08px;font-family:'Liberation Mono', monospace;font-size:26px;line-height:26px;color:#4b5059;transform:scaleY(1.1);transform-origin:0 19.92px">19</div>
<div class="t" style="left:1154.8px;top:1000.08px;font-family:'Liberation Mono', monospace;font-size:26px;line-height:26px;color:#bcbec4;font-weight:400;letter-spacing:0px;;transform:scaleY(1.1);transform-origin:0 19.92px;-webkit-text-stroke:0.3px currentColor;letter-spacing:-0.02px"><span style="color:#7a7e85">// Hello</span></div>
<div class="t" style="left:875.3px;top:1044.08px;font-family:'Liberation Mono', monospace;font-size:26px;line-height:26px;color:#4b5059;transform:scaleY(1.1);transform-origin:0 19.92px">20</div>
<div class="t" style="left:1154.8px;top:1044.08px;font-family:'Liberation Mono', monospace;font-size:26px;line-height:26px;color:#bcbec4;font-weight:400;letter-spacing:0px;;transform:scaleY(1.1);transform-origin:0 19.92px;-webkit-text-stroke:0.3px currentColor;letter-spacing:-0.02px"><span style="color:#bcbec4">PrintWriter out = response.getWriter();</span></div>
<div class="t" style="left:875.3px;top:1088.08px;font-family:'Liberation Mono', monospace;font-size:26px;line-height:26px;color:#4b5059;transform:scaleY(1.1);transform-origin:0 19.92px">21</div>
<div class="t" style="left:1154.8px;top:1088.08px;font-family:'Liberation Mono', monospace;font-size:26px;line-height:26px;color:#bcbec4;font-weight:400;letter-spacing:0px;;transform:scaleY(1.1);transform-origin:0 19.92px;-webkit-text-stroke:0.3px currentColor;letter-spacing:-0.02px"><span style="color:#bcbec4">out.println(</span><span style="color:#6aab73">"&lt;html&gt;&lt;body&gt;"</span><span style="color:#bcbec4">);</span></div>
<div class="t" style="left:875.3px;top:1132.08px;font-family:'Liberation Mono', monospace;font-size:26px;line-height:26px;color:#4b5059;transform:scaleY(1.1);transform-origin:0 19.92px">22</div>
<div class="t" style="left:1154.8px;top:1132.08px;font-family:'Liberation Mono', monospace;font-size:26px;line-height:26px;color:#bcbec4;font-weight:400;letter-spacing:0px;;transform:scaleY(1.1);transform-origin:0 19.92px;-webkit-text-stroke:0.3px currentColor;letter-spacing:-0.02px"><span style="color:#bcbec4">out.println(</span><span style="color:#6aab73">"&lt;h1&gt;"</span><span style="color:#bcbec4"> + </span><span style="color:#c77dbb">message</span><span style="color:#bcbec4"> + </span><span style="color:#6aab73">"&lt;/h1&gt;"</span><span style="color:#bcbec4">);</span></div>
<div class="t" style="left:875.3px;top:1176.08px;font-family:'Liberation Mono', monospace;font-size:26px;line-height:26px;color:#4b5059;transform:scaleY(1.1);transform-origin:0 19.92px">23</div>
<div class="t" style="left:1154.8px;top:1176.08px;font-family:'Liberation Mono', monospace;font-size:26px;line-height:26px;color:#bcbec4;font-weight:400;letter-spacing:0px;;transform:scaleY(1.1);transform-origin:0 19.92px;-webkit-text-stroke:0.3px currentColor;letter-spacing:-0.02px"><span style="color:#bcbec4">out.println(</span><span style="color:#6aab73">"&lt;/body&gt;&lt;/html&gt;"</span><span style="color:#bcbec4">);</span></div>
<div class="t" style="left:875.3px;top:1220.08px;font-family:'Liberation Mono', monospace;font-size:26px;line-height:26px;color:#4b5059;transform:scaleY(1.1);transform-origin:0 19.92px">24</div>
<div class="t" style="left:1092.4px;top:1220.08px;font-family:'Liberation Mono', monospace;font-size:26px;line-height:26px;color:#bcbec4;font-weight:400;letter-spacing:0px;;transform:scaleY(1.1);transform-origin:0 19.92px;-webkit-text-stroke:0.3px currentColor;letter-spacing:-0.02px"><span style="color:#bcbec4">}</span></div>
<div class="t" style="left:875.3px;top:1264.08px;font-family:'Liberation Mono', monospace;font-size:26px;line-height:26px;color:#4b5059;transform:scaleY(1.1);transform-origin:0 19.92px">25</div>
<div class="t" style="left:875.3px;top:1352.08px;font-family:'Liberation Mono', monospace;font-size:26px;line-height:26px;color:#4b5059;transform:scaleY(1.1);transform-origin:0 19.92px">26</div>
<div class="t" style="left:1092.4px;top:1352.08px;font-family:'Liberation Mono', monospace;font-size:26px;line-height:26px;color:#bcbec4;font-weight:400;letter-spacing:0px;;transform:scaleY(1.1);transform-origin:0 19.92px;-webkit-text-stroke:0.3px currentColor;letter-spacing:-0.02px"><span style="color:#cf8e6d">public</span><span style="color:#bcbec4"> </span><span style="color:#cf8e6d">void</span><span style="color:#bcbec4"> </span><span style="color:#56a8f5">destroy</span><span style="color:#bcbec4">() {</span></div>
<div class="t" style="left:875.3px;top:1396.08px;font-family:'Liberation Mono', monospace;font-size:26px;line-height:26px;color:#4b5059;transform:scaleY(1.1);transform-origin:0 19.92px">27</div>
<div class="t" style="left:1092.4px;top:1396.08px;font-family:'Liberation Mono', monospace;font-size:26px;line-height:26px;color:#bcbec4;font-weight:400;letter-spacing:0px;;transform:scaleY(1.1);transform-origin:0 19.92px;-webkit-text-stroke:0.3px currentColor;letter-spacing:-0.02px"><span style="color:#bcbec4">}</span></div>
<div class="t" style="left:1030px;top:426.83px;font-family:'Liberation Sans', sans-serif;font-size:25px;line-height:25px;color:#868a91;font-weight:400;letter-spacing:0.4px;;-webkit-text-stroke:0.3px currentColor">new *</div>
<div class="t" style="left:1092px;top:558.83px;font-family:'Liberation Sans', sans-serif;font-size:25px;line-height:25px;color:#868a91;font-weight:400;letter-spacing:0.4px;;-webkit-text-stroke:0.3px currentColor">2 usages</div>
<div class="t" style="left:1092px;top:690.83px;font-family:'Liberation Sans', sans-serif;font-size:25px;line-height:25px;color:#868a91;font-weight:400;letter-spacing:0.4px;;-webkit-text-stroke:0.3px currentColor">new *</div>
<div class="t" style="left:1092px;top:822.83px;font-family:'Liberation Sans', sans-serif;font-size:25px;line-height:25px;color:#868a91;font-weight:400;letter-spacing:0.4px;;-webkit-text-stroke:0.3px currentColor">no usages</div>
<div class="t" style="left:1231px;top:822.83px;font-family:'Liberation Sans', sans-serif;font-size:25px;line-height:25px;color:#868a91;font-weight:400;letter-spacing:0.4px;;-webkit-text-stroke:0.3px currentColor">new *</div>
<div class="t" style="left:1092px;top:1306.83px;font-family:'Liberation Sans', sans-serif;font-size:25px;line-height:25px;color:#868a91;font-weight:400;letter-spacing:0.4px;;-webkit-text-stroke:0.3px currentColor">new *</div>
<div style="left:1030px;top:376px;width:15px;height:36px;background:#ced0d6;"></div>
<div style="left:1088px;top:900px;width:2px;height:308px;background:#2c2d30;"></div>
<svg style="position:absolute;left:1005.25px;top:340.5px;" width="11.5" height="19" viewBox="0 0 11.5 19" fill="none"><path d="M2 2 L9.5 9.5 L2 17" stroke="#6f737a" stroke-width="2" stroke-linecap="round" stroke-linejoin="round"/></svg>
<svg style="position:absolute;left:1005.25px;top:736.5px;" width="11.5" height="19" viewBox="0 0 11.5 19" fill="none"><path d="M2 2 L9.5 9.5 L2 17" stroke="#6f737a" stroke-width="2" stroke-linecap="round" stroke-linejoin="round"/></svg>
<svg style="position:absolute;left:915px;top:729px;" width="30" height="32" viewBox="0 0 30 32" fill="none"><circle cx="14" cy="17.5" r="10" stroke="#548af7" stroke-width="2.4" fill="#1f2a45"/><circle cx="14" cy="17.5" r="5" stroke="#548af7" stroke-width="2.4"/><path d="M19.5 10 L24 6" stroke="#1c1d1f" stroke-width="5"/><path d="M26 17 V2 M21 7 L26 2 L31 7" stroke="#e55765" stroke-width="2.2" fill="none"/></svg>
<svg style="position:absolute;left:915px;top:861px;" width="30" height="32" viewBox="0 0 30 32" fill="none"><circle cx="14" cy="17.5" r="10" stroke="#548af7" stroke-width="2.4" fill="#1f2a45"/><circle cx="14" cy="17.5" r="5" stroke="#548af7" stroke-width="2.4"/><path d="M19.5 10 L24 6" stroke="#1c1d1f" stroke-width="5"/><path d="M26 17 V2 M21 7 L26 2 L31 7" stroke="#e55765" stroke-width="2.2" fill="none"/></svg>
<svg style="position:absolute;left:915px;top:1345px;" width="30" height="32" viewBox="0 0 30 32" fill="none"><circle cx="14" cy="17.5" r="10" stroke="#548af7" stroke-width="2.4" fill="#1f2a45"/><circle cx="14" cy="17.5" r="5" stroke="#548af7" stroke-width="2.4"/><path d="M19.5 10 L24 6" stroke="#1c1d1f" stroke-width="5"/><path d="M26 17 V2 M21 7 L26 2 L31 7" stroke="#e55765" stroke-width="2.2" fill="none"/></svg>
<svg style="position:absolute;left:951px;top:862px;" width="32" height="32" viewBox="0 0 32 32" fill="none"><path d="M24 26.5 Q20 29 16 29 A13 13 0 1 1 29 16 V17.5 Q29 21.5 25.5 21.5 Q22 21.5 22 17.5 V10.5" stroke="#ced0d6" stroke-width="2.2" fill="none" stroke-linecap="round"/><circle cx="16" cy="16" r="5.8" stroke="#ced0d6" stroke-width="2.2"/></svg>
<div class="t" style="left:2800px;top:255.53px;font-family:'Liberation Sans', sans-serif;font-size:23px;line-height:23px;color:#a8abb0;font-weight:400;letter-spacing:0.3px;;-webkit-text-stroke:0.3px currentColor">OFF</div>
<div style="left:2838px;top:296px;width:16px;height:902px;background:#36383b;border-radius:8px"></div>
<div style="left:193px;top:1418px;width:2667px;height:745px;background:#27282b;"></div>
<div style="left:193px;top:1416px;width:2667px;height:2px;background:#1a1b1d;"></div>
<svg style="position:absolute;left:130px;top:1538px;" width="44" height="48" viewBox="0 0 44 48" fill="none"><path d="M8 6 Q8 3 12 3 H38 Q42 3 42 7 V40 Q42 44 38 44 H12 Q8 44 8 40 Z" fill="#80c3e6"/><path d="M6 4 L11 2 L11 8 Z M42 2 L45 6 L41 8 Z" fill="#80c3e6"/><circle cx="19.5" cy="12" r="5" fill="#e8e4dc"/><circle cx="32" cy="12" r="5" fill="#e8e4dc"/><circle cx="19.5" cy="12" r="2.2" fill="#333"/><circle cx="32" cy="12" r="2.2" fill="#333"/><ellipse cx="25.5" cy="18.5" rx="2.5" ry="1.8" fill="#6b4a3a"/><path d="M2 17.5 Q9 16 15 14 Q21 16 22 17.5 V29 Q21 38 11.5 44 Q3 38 2 29 Z" fill="#2bbf5c"/><path d="M7 26 L12 24 L15 22" stroke="#d9f5e0" stroke-width="2.2" fill="none"/></svg>
<svg style="position:absolute;left:132px;top:1622px;" width="40" height="40" viewBox="0 0 40 40" fill="none"><rect x="5" y="5" width="30" height="30" rx="4" fill="#6a6b6e"/><path d="M15 11 H10 V29 H15 M25 11 H30 V29 H25" stroke="#27282b" stroke-width="3.6" fill="none"/></svg>
<div style="left:122px;top:1692px;width:60px;height:60px;background:#404246;border-radius:10px"></div>
<svg style="position:absolute;left:122px;top:1692px;" width="60" height="60" viewBox="0 0 60 60" fill="none"><path d="M155.5 1705.5 H142.7 L133.5 1721.8 L142.7 1738 H161 L170 1721.8 L167.5 1717" transform="translate(-122,-1692)" stroke="#ced0d6" stroke-width="2.8" fill="none" stroke-linejoin="round" stroke-linecap="round"/><path d="M147 1714.5 L161.5 1722 L147 1730 Z" transform="translate(-122,-1692)" stroke="#ced0d6" stroke-width="2.8" fill="none" stroke-linejoin="round"/></svg>
<div style="left:158px;top:1702px;width:14px;height:14px;border-radius:50%;background:#59a869"></div>
<svg style="position:absolute;left:122px;top:1770px;" width="60" height="60" viewBox="0 0 60 60" fill="none"><path d="M134.5 1784 H147 Q149 1785.5 151 1784 H158 Q166 1784 169 1796 Q164 1790.5 158.5 1792.5 Q155 1794.5 152 1794.5 H147.5 Q145 1793 143 1795 H134.5 Z" transform="translate(-122,-1770)" stroke="#ced0d6" stroke-width="2.4" stroke-linejoin="round" fill="none"/><path d="M146.5 1795 Q145.5 1800 145.5 1805 V1819 H156 V1805 Q156 1800 154.5 1795" transform="translate(-122,-1770)" stroke="#ced0d6" stroke-width="2.4" stroke-linejoin="round" fill="none"/></svg>
<svg style="position:absolute;left:132px;top:1860px;" width="40" height="40" viewBox="0 0 40 40" fill="none"><path d="M9 5 Q9 3 11 4 L34 18.5 Q36 20 34 21.5 L11 36 Q9 37 9 35 Z" stroke="#ced0d6" stroke-width="2.4" stroke-linejoin="round" fill="none"/></svg>
<svg style="position:absolute;left:130px;top:1940px;" width="44" height="40" viewBox="0 0 44 40" fill="none"><rect x="4" y="5" width="36" height="31" rx="3" stroke="#ced0d6" stroke-width="2.4"/><path d="M11 13 L18 18 L11 23 M21 27 H30" stroke="#ced0d6" stroke-width="2.4" stroke-linecap="round"/></svg>
<svg style="position:absolute;left:132px;top:2021px;" width="40" height="40" viewBox="0 0 40 40" fill="none"><circle cx="20" cy="20" r="17" stroke="#ced0d6" stroke-width="2.4"/><path d="M20 10 V23" stroke="#ced0d6" stroke-width="3" stroke-linecap="round"/><circle cx="20" cy="29" r="2" fill="#ced0d6"/></svg>
<svg style="position:absolute;left:132px;top:2098px;" width="40" height="44" viewBox="0 0 40 44" fill="none"><circle cx="10" cy="9" r="5.5" stroke="#ced0d6" stroke-width="2.4"/><circle cx="30" cy="13" r="5.5" stroke="#ced0d6" stroke-width="2.4"/><path d="M10 14.5 V42 M10 28 H18 Q30 28 30 18.5" stroke="#ced0d6" stroke-width="2.4" fill="none"/></svg>
<div class="t" style="left:217px;top:1446.99px;font-family:'Liberation Sans', sans-serif;font-size:26px;line-height:26px;color:#dfe1e5;font-weight:700;letter-spacing:0.1px;">Services</div>
<div style="left:193px;top:1498px;width:2667px;height:1px;background:#1a1b1d;"></div>
<div style="left:193px;top:1568px;width:802px;height:1px;background:#1a1b1d;"></div>
<div style="left:994px;top:1499px;width:1px;height:664px;background:#1a1b1d;"></div>
<svg style="position:absolute;left:204px;top:1516px;" width="32" height="36" viewBox="0 0 32 36" fill="none"><path d="M8 13 L16 5.5 L24 13 M8 23 L16 30.5 L24 23" stroke="#ced0d6" stroke-width="2.2" fill="none" stroke-linecap="round" stroke-linejoin="round"/></svg>
<svg style="position:absolute;left:256px;top:1516px;" width="32" height="36" viewBox="0 0 32 36" fill="none"><path d="M8 5.5 L16 13 L24 5.5 M8 30.5 L16 23 L24 30.5" stroke="#ced0d6" stroke-width="2.2" fill="none" stroke-linecap="round" stroke-linejoin="round"/></svg>
<div style="left:304px;top:1514px;width:2px;height:40px;background:#3c3e42;"></div>
<svg style="position:absolute;left:320px;top:1516px;" width="40" height="36" viewBox="0 0 40 36" fill="none"><path d="M3 18 Q18 3 35 18 Q18 33 3 18 Z" stroke="#ced0d6" stroke-width="2.2" stroke-linejoin="round"/><circle cx="19" cy="18" r="5.5" stroke="#ced0d6" stroke-width="2.2"/></svg>
<svg style="position:absolute;left:347px;top:1543px;" width="10" height="10" viewBox="0 0 10 10" fill="none"><path d="M9 1 V9 H1 Z" fill="#ced0d6"/></svg>
<svg style="position:absolute;left:374px;top:1516px;" width="36" height="36" viewBox="0 0 36 36" fill="none"><path d="M4 6 H28 L19 18 V28 L13 31 V18 Z" stroke="#ced0d6" stroke-width="2.2" stroke-linejoin="round"/></svg>
<svg style="position:absolute;left:398px;top:1543px;" width="10" height="10" viewBox="0 0 10 10" fill="none"><path d="M9 1 V9 H1 Z" fill="#ced0d6"/></svg>
<svg style="position:absolute;left:424px;top:1512px;" width="40" height="40" viewBox="0 0 40 40" fill="none"><path d="M15 13 H8 Q5 13 5 16 V29 Q5 32 8 32 H21 Q24 32 24 29 V25" stroke="#ced0d6" stroke-width="2.2" fill="none"/><path d="M27 5 V21 M19 13 H35" stroke="#ced0d6" stroke-width="2.2"/></svg>
<div style="left:474px;top:1514px;width:2px;height:40px;background:#3c3e42;"></div>
<svg style="position:absolute;left:490px;top:1516px;" width="36" height="36" viewBox="0 0 36 36" fill="none"><path d="M17 4 V31 M3.5 17.5 H31" stroke="#ced0d6" stroke-width="2.2"/></svg>
<svg style="position:absolute;left:513px;top:1543px;" width="10" height="10" viewBox="0 0 10 10" fill="none"><path d="M9 1 V9 H1 Z" fill="#ced0d6"/></svg>
<svg style="position:absolute;left:224.0px;top:1596.0px;" width="20" height="12.0" viewBox="0 0 20 12.0" fill="none"><path d="M2 2 L10.0 10.0 L18 2" stroke="#a8abb0" stroke-width="2" stroke-linecap="round" stroke-linejoin="round"/></svg>
<svg style="position:absolute;left:260px;top:1590px;transform:scale(0.9);transform-origin:0 0" width="32" height="26" viewBox="0 0 32 26" fill="none"><path d="M9 13 Q3 9 7 3" stroke="#1a1a1a" stroke-width="1.6" fill="none"/><path d="M1 24 Q7 15 15 13.5 L23 14 Q27 19 31 23.5 Q25 20.5 19 21.5 Q10 21.5 1 24 Z" fill="#dca336" stroke="#1a1a1a" stroke-width="1.1"/><path d="M12 16 L14 20 M17 14 L18.5 19" stroke="#1a1a1a" stroke-width="1"/><path d="M18 5 L19 1 L22.5 3.5 H26 L29.5 1 L30.5 5 Q32 11 26 14.5 Q20.5 15 18.8 11 Q17.5 8 18 5 Z" fill="#f2cc64" stroke="#1a1a1a" stroke-width="1.1"/><path d="M22 8 H23 M26 8 H27 M23.5 11 Q24.5 12 25.5 11" stroke="#5a4000" stroke-width="1"/></svg>
<div class="t" style="left:298px;top:1589.99px;font-family:'Liberation Sans', sans-serif;font-size:26px;line-height:26px;color:#dfe1e5;font-weight:400;letter-spacing:0.9px;;-webkit-text-stroke:0.3px currentColor">Tomcat Server</div>
<svg style="position:absolute;left:262.0px;top:1644.0px;" width="20" height="12.0" viewBox="0 0 20 12.0" fill="none"><path d="M2 2 L10.0 10.0 L18 2" stroke="#a8abb0" stroke-width="2" stroke-linecap="round" stroke-linejoin="round"/></svg>
<svg style="position:absolute;left:300px;top:1634px;" width="32" height="32" viewBox="0 0 32 32" fill="none"><path d="M4 4 Q4 2.5 5.5 3.3 L26 14.5 Q27.5 15.5 26 16.5 L5.5 27.7 Q4 28.5 4 27 Z" fill="#253526" stroke="#59a869" stroke-width="2.2" stroke-linejoin="round"/></svg>
<div class="t" style="left:336px;top:1637.99px;font-family:'Liberation Sans', sans-serif;font-size:26px;line-height:26px;color:#dfe1e5;font-weight:400;letter-spacing:0.1px;;-webkit-text-stroke:0.3px currentColor">Running</div>
<div style="left:218px;top:1674px;width:752px;height:48px;background:#3a3b3f;border-radius:8px"></div>
<svg style="position:absolute;left:300.0px;top:1692.0px;" width="20" height="12.0" viewBox="0 0 20 12.0" fill="none"><path d="M2 2 L10.0 10.0 L18 2" stroke="#a8abb0" stroke-width="2" stroke-linecap="round" stroke-linejoin="round"/></svg>
<svg style="position:absolute;left:338px;top:1686px;transform:scale(0.9);transform-origin:0 0" width="32" height="26" viewBox="0 0 32 26" fill="none"><path d="M9 13 Q3 9 7 3" stroke="#1a1a1a" stroke-width="1.6" fill="none"/><path d="M1 24 Q7 15 15 13.5 L23 14 Q27 19 31 23.5 Q25 20.5 19 21.5 Q10 21.5 1 24 Z" fill="#dca336" stroke="#1a1a1a" stroke-width="1.1"/><path d="M12 16 L14 20 M17 14 L18.5 19" stroke="#1a1a1a" stroke-width="1"/><path d="M18 5 L19 1 L22.5 3.5 H26 L29.5 1 L30.5 5 Q32 11 26 14.5 Q20.5 15 18.8 11 Q17.5 8 18 5 Z" fill="#f2cc64" stroke="#1a1a1a" stroke-width="1.1"/><path d="M22 8 H23 M26 8 H27 M23.5 11 Q24.5 12 25.5 11" stroke="#5a4000" stroke-width="1"/></svg>
<svg style="position:absolute;left:355px;top:1697px;" width="16" height="20" viewBox="0 0 16 20" fill="none"><path d="M2 2 L14 10 L2 18 Z" fill="#59a869"/></svg>
<div class="t" style="left:374px;top:1685.99px;font-family:'Liberation Sans', sans-serif;font-size:26px;line-height:26px;color:#dfe1e5;font-weight:700;letter-spacing:0.45px;">Tomcat 10.1.23</div>
<div class="t" style="left:576px;top:1685.99px;font-family:'Liberation Sans', sans-serif;font-size:26px;line-height:26px;color:#868a91;font-weight:400;letter-spacing:0.8px;;-webkit-text-stroke:0.3px currentColor">[local]</div>
<svg style="position:absolute;left:374px;top:1728px;" width="36" height="36" viewBox="0 0 36 36" fill="none"><path d="M13 3 L19 9 L13 15 L7 9 Z" stroke="#a8abb0" stroke-width="2" fill="none"/><path d="M7 12 L1 18 L7 24 L13 18 Z" stroke="#548af7" stroke-width="2" fill="#1f2a45"/><circle cx="21" cy="26" r="8" stroke="#ced0d6" stroke-width="2" fill="#27282b"/><path d="M13 26 H29 M21 18 V34 M17 19 Q13 26 17 33 M25 19 Q29 26 25 33" stroke="#ced0d6" stroke-width="1.6" fill="none"/></svg>
<svg style="position:absolute;left:407px;top:1734px;" width="30" height="24" viewBox="0 0 30 24" fill="none"><path d="M2 13.0 L11.1 21.0 L28 2" stroke="#59a869" stroke-width="3.6" fill="none" stroke-linecap="round" stroke-linejoin="round"/></svg>
<div class="t" style="left:444px;top:1733.99px;font-family:'Liberation Sans', sans-serif;font-size:26px;line-height:26px;color:#dfe1e5;font-weight:400;letter-spacing:0.95px;;-webkit-text-stroke:0.3px currentColor">WebTest:war exploded</div>
<div class="t" style="left:737px;top:1733.99px;font-family:'Liberation Sans', sans-serif;font-size:26px;line-height:26px;color:#868a91;font-weight:400;letter-spacing:0.85px;;-webkit-text-stroke:0.3px currentColor">[Synchronized]</div>
<div style="left:1001px;top:2139px;width:217px;height:17px;background:#424345;border-radius:8px"></div>
<div style="left:995px;top:1568px;width:1865px;height:1px;background:#1a1b1d;"></div>
<div class="t" style="left:1022px;top:1521.99px;font-family:'Liberation Sans', sans-serif;font-size:26px;line-height:26px;color:#dfe1e5;font-weight:400;letter-spacing:0.4px;;-webkit-text-stroke:0.3px currentColor">Server</div>
<div style="left:996px;top:1565px;width:134px;height:4px;background:#5a5d63;"></div>
<svg style="position:absolute;left:1150px;top:1516px;" width="36" height="36" viewBox="0 0 36 36" fill="none"><rect x="3" y="5" width="30" height="25" rx="3" stroke="#ced0d6" stroke-width="2.2"/><path d="M9 12 L15 16.5 L9 21 M17 24 H25" stroke="#ced0d6" stroke-width="2.2" stroke-linecap="round"/></svg>
<div class="t" style="left:1194px;top:1521.99px;font-family:'Liberation Sans', sans-serif;font-size:26px;line-height:26px;color:#dfe1e5;font-weight:400;letter-spacing:0.8px;;-webkit-text-stroke:0.3px currentColor">Tomcat Catalina Log</div>
<svg style="position:absolute;left:1510px;top:1514px;" width="40" height="40" viewBox="0 0 40 40" fill="none"><path d="M28 10 A12 12 0 1 0 18.5 32" stroke="#ced0d6" stroke-width="2.2" fill="none"/><path d="M19.5 11.5 H29.5 V2" stroke="#ced0d6" stroke-width="2.2" fill="none"/><path d="M21 19 Q21 17.5 22.5 18.3 L33 24.5 Q34.5 25.5 33 26.5 L22.5 32.7 Q21 33.5 21 32 Z" stroke="#59a869" stroke-width="2.2" fill="#253526" stroke-linejoin="round"/></svg>
<svg style="position:absolute;left:1564px;top:1514px;" width="40" height="40" viewBox="0 0 40 40" fill="none"><path d="M28 10 A12 12 0 1 0 18.5 32" stroke="#ced0d6" stroke-width="2.2" fill="none"/><path d="M19.5 11.5 H29.5 V2" stroke="#ced0d6" stroke-width="2.2" fill="none"/><ellipse cx="26" cy="28" rx="5.5" ry="7" stroke="#59a869" stroke-width="2.2" fill="#253526"/><path d="M18 23 L21 24.5 M34 23 L31 24.5 M18 35 L21 32.5 M34 35 L31 32.5" stroke="#59a869" stroke-width="2"/></svg>
<div style="left:1622px;top:1522px;width:24px;height:24px;background:#4e2b2c;border:2.4px solid #e55765;border-radius:5px;box-sizing:border-box"></div>
<svg style="position:absolute;left:1666px;top:1514px;" width="40" height="40" viewBox="0 0 40 40" fill="none"><path d="M28 10 A12 12 0 1 0 31.5 24" stroke="#ced0d6" stroke-width="2.2" fill="none"/><path d="M19.5 11.5 H29.5 V2" stroke="#ced0d6" stroke-width="2.2" fill="none"/></svg>
<div style="left:1718px;top:1514px;width:2px;height:40px;background:#3c3e42;"></div>
<svg style="position:absolute;left:1732px;top:1514px;" width="40" height="42" viewBox="0 0 40 42" fill="none"><path d="M5 31 Q3 12 20 9 Q37 12 35 31 Z" stroke="#ced0d6" stroke-width="2.2" stroke-linejoin="round"/><circle cx="17.5" cy="23" r="3" stroke="#ced0d6" stroke-width="2"/><path d="M20 21 L27 15" stroke="#ced0d6" stroke-width="2.2" stroke-linecap="round"/><path d="M39 32 V41 H30 Z" fill="#ced0d6"/></svg>
<div style="left:1801.5px;top:1521.5px;width:5px;height:5px;border-radius:50%;background:#ced0d6"></div>
<div style="left:1801.5px;top:1531.5px;width:5px;height:5px;border-radius:50%;background:#ced0d6"></div>
<div style="left:1801.5px;top:1541.5px;width:5px;height:5px;border-radius:50%;background:#ced0d6"></div>
<div style="left:1271px;top:1569px;width:1px;height:594px;background:#1a1b1d;"></div>
<div style="left:1272px;top:1569px;width:63px;height:594px;background:#27282b;"></div>
<svg style="position:absolute;left:999px;top:1591px;" width="30" height="23" viewBox="0 0 30 23" fill="none"><path d="M2 12.5 L11.1 20.0 L28 2" stroke="#59a869" stroke-width="3.6" fill="none" stroke-linecap="round" stroke-linejoin="round"/></svg>
<div style="left:1037px;top:1580px;width:234px;height:44px;overflow:hidden">
<div class="t" style="left:1px;top:10.0px;font-family:'Liberation Sans', sans-serif;font-size:26px;line-height:26px;color:#dfe1e5;letter-spacing:0.9px">WebTest:war exploded</div>
</div>
<svg style="position:absolute;left:1284px;top:1590px;" width="40" height="40" viewBox="0 0 40 40" fill="none"><path d="M4 20 H34 M28 14 L34 20 L28 26 M16 13 L24 5 M18 5 H24 V11 M16 27 L24 35 M18 35 H24 V29" stroke="#59a869" stroke-width="2.2" fill="none"/></svg>
<svg style="position:absolute;left:1284px;top:1642px;" width="40" height="40" viewBox="0 0 40 40" fill="none"><path d="M6 20 H36 M12 14 L6 20 L12 26 M17 13 L25 5 M19 5 H25 V11 M17 27 L25 35 M19 35 H25 V29" stroke="#6f737a" stroke-width="2.2" fill="none"/></svg>
<svg style="position:absolute;left:1284px;top:1694px;" width="40" height="40" viewBox="0 0 40 40" fill="none"><path d="M8 18 A12 12 0 0 1 30 14 M32 22 A12 12 0 0 1 10 26" stroke="#ced0d6" stroke-width="2.2" fill="none"/><path d="M3 15 L8 20 L12 14 M37 25 L32 20 L28 26" stroke="#ced0d6" stroke-width="2.2" fill="none"/></svg>
<svg style="position:absolute;left:1284px;top:1746px;" width="40" height="40" viewBox="0 0 40 40" fill="none"><rect x="3" y="4" width="28" height="24" rx="3" stroke="#ced0d6" stroke-width="2.2" fill="#393b40"/><path d="M9 11 H13 M16 11 H20" stroke="#ced0d6" stroke-width="2"/><path d="M28 16 V34 M22 28 L28 34 L34 28" stroke="#59a869" stroke-width="2.4" fill="none"/></svg>
<div style="left:1335px;top:1569px;width:1431px;height:594px;background:#1c1d1f;"></div>
<div style="left:1336px;top:1569px;width:1428px;height:565px;overflow:hidden">
<div class="t" style="left:25px;top:6.08px;font-family:'Liberation Mono', monospace;font-size:26px;line-height:26px;color:#f75464;transform:scaleY(1.1);transform-origin:0 19.92px;-webkit-text-stroke:0.3px currentColor;letter-spacing:-0.02px">01-May-2024 16:54:58.944 INFO [main] org.apache.coyote.AbstractProtocol.init Initializing ProtocolHandler</div>
<div class="t" style="left:25px;top:50.08px;font-family:'Liberation Mono', monospace;font-size:26px;line-height:26px;color:#f75464;transform:scaleY(1.1);transform-origin:0 19.92px;-webkit-text-stroke:0.3px currentColor;letter-spacing:-0.02px">01-May-2024 16:54:58.967 INFO [main] org.apache.catalina.startup.Catalina.load Server initialization</div>
<div class="t" style="left:25px;top:94.08px;font-family:'Liberation Mono', monospace;font-size:26px;line-height:26px;color:#f75464;transform:scaleY(1.1);transform-origin:0 19.92px;-webkit-text-stroke:0.3px currentColor;letter-spacing:-0.02px">01-May-2024 16:54:59.010 INFO [main] org.apache.catalina.core.StandardService.startInternal Starting</div>
<div class="t" style="left:25px;top:138.08px;font-family:'Liberation Mono', monospace;font-size:26px;line-height:26px;color:#f75464;transform:scaleY(1.1);transform-origin:0 19.92px;-webkit-text-stroke:0.3px currentColor;letter-spacing:-0.02px">01-May-2024 16:54:59.010 INFO [main] org.apache.catalina.core.StandardEngine.startInternal Starting</div>
<div class="t" style="left:25px;top:182.08px;font-family:'Liberation Mono', monospace;font-size:26px;line-height:26px;color:#f75464;transform:scaleY(1.1);transform-origin:0 19.92px;-webkit-text-stroke:0.3px currentColor;letter-spacing:-0.02px">01-May-2024 16:54:59.017 INFO [main] org.apache.coyote.AbstractProtocol.start Starting ProtocolHandler</div>
<div class="t" style="left:25px;top:226.08px;font-family:'Liberation Mono', monospace;font-size:26px;line-height:26px;color:#f75464;transform:scaleY(1.1);transform-origin:0 19.92px;-webkit-text-stroke:0.3px currentColor;letter-spacing:-0.02px">01-May-2024 16:54:59.026 INFO [main] org.apache.catalina.startup.Catalina.start Server startup in</div>
<div class="t" style="left:25px;top:270.08px;font-family:'Liberation Mono', monospace;font-size:26px;line-height:26px;color:#bcbec4;transform:scaleY(1.1);transform-origin:0 19.92px;-webkit-text-stroke:0.3px currentColor;letter-spacing:-0.02px">Connected to server</div>
<div class="t" style="left:25px;top:314.08px;font-family:'Liberation Mono', monospace;font-size:26px;line-height:26px;color:#bcbec4;transform:scaleY(1.1);transform-origin:0 19.92px;-webkit-text-stroke:0.3px currentColor;letter-spacing:-0.02px">[2024-05-01 04:54:59,522] Artifact WebTest:war exploded: Artifact is being deployed, please wait...</div>
<div class="t" style="left:25px;top:358.08px;font-family:'Liberation Mono', monospace;font-size:26px;line-height:26px;color:#bcbec4;transform:scaleY(1.1);transform-origin:0 19.92px;-webkit-text-stroke:0.3px currentColor;letter-spacing:-0.02px">[2024-05-01 04:54:59,714] Artifact WebTest:war exploded: Artifact is deployed successfully</div>
<div class="t" style="left:25px;top:402.08px;font-family:'Liberation Mono', monospace;font-size:26px;line-height:26px;color:#bcbec4;transform:scaleY(1.1);transform-origin:0 19.92px;-webkit-text-stroke:0.3px currentColor;letter-spacing:-0.02px">[2024-05-01 04:54:59,715] Artifact WebTest:war exploded: Deploy took 193 milliseconds</div>
<div class="t" style="left:25px;top:446.08px;font-family:'Liberation Mono', monospace;font-size:26px;line-height:26px;color:#f75464;transform:scaleY(1.1);transform-origin:0 19.92px;-webkit-text-stroke:0.3px currentColor;letter-spacing:-0.02px">01-May-2024 16:55:09.028 INFO [Catalina-utility-2] org.apache.catalina.startup.HostConfig.deployDirectory</div>
<div class="t" style="left:25px;top:490.08px;font-family:'Liberation Mono', monospace;font-size:26px;line-height:26px;color:#f75464;transform:scaleY(1.1);transform-origin:0 19.92px;-webkit-text-stroke:0.3px currentColor;letter-spacing:-0.02px">01-May-2024 16:55:09.067 INFO [Catalina-utility-2] org.apache.catalina.startup.HostConfig.deployDirectory</div>
</div>
<div style="left:1360px;top:2134px;width:1406px;height:28px;background:#35383a;"></div>
<div style="left:1366px;top:2140px;width:360px;height:16px;background:#55575a;border-radius:8px"></div>
<div style="left:2766px;top:1569px;width:28px;height:565px;background:#313436;"></div>
<div style="left:2766px;top:2134px;width:28px;height:29px;background:#27282b;"></div>
<div style="left:2772px;top:1982px;width:16px;height:146px;background:#4f5154;border-radius:8px"></div>
<div style="left:2794px;top:1569px;width:1px;height:594px;background:#1a1b1d;"></div>
<svg style="position:absolute;left:2810px;top:1590px;" width="36" height="40" viewBox="0 0 36 40" fill="none"><path d="M18 5 V34 M8 15 L18 5 L28 15" stroke="#ced0d6" stroke-width="2.2" fill="none"/></svg>
<svg style="position:absolute;left:2810px;top:1643px;" width="36" height="40" viewBox="0 0 36 40" fill="none"><path d="M18 5 V34 M8 24 L18 34 L28 24" stroke="#ced0d6" stroke-width="2.2" fill="none"/></svg>
<svg style="position:absolute;left:2810px;top:1696px;" width="36" height="40" viewBox="0 0 36 40" fill="none"><path d="M4 8 H32 M4 17 H28 Q33 17 33 22 Q33 27 28 27 H18 M4 27 H11 M22 22 L17 27 L22 32" stroke="#ced0d6" stroke-width="2.2" fill="none"/></svg>
<div style="left:2806px;top:1744px;width:44px;height:44px;background:#404246;border-radius:6px"></div>
<svg style="position:absolute;left:2810px;top:1746px;" width="36" height="40" viewBox="0 0 36 40" fill="none"><path d="M4 10 H14 M4 20 H14 M4 30 H32 M23 6 V24 M16 17 L23 24 L30 17" stroke="#ced0d6" stroke-width="2.2" fill="none"/></svg>
<svg style="position:absolute;left:2810px;top:1798px;" width="36" height="40" viewBox="0 0 36 40" fill="none"><path d="M9 14 V7 H27 V14 M9 28 H4 V15 H32 V28 H27 M9 22 H27 V34 H9 Z" stroke="#ced0d6" stroke-width="2.2" fill="none" stroke-linejoin="round"/><circle cx="27" cy="19" r="1.5" fill="#ced0d6"/></svg>
<svg style="position:absolute;left:2810px;top:1850px;" width="36" height="40" viewBox="0 0 36 40" fill="none"><path d="M5 10 H31 M13 10 V5 H23 V10 M8 10 L9 35 H27 L28 10 M15 16 V29 M21 16 V29" stroke="#ced0d6" stroke-width="2.2" fill="none" stroke-linejoin="round"/></svg>
<svg style="position:absolute;left:2881px;top:176px;" width="42" height="42" viewBox="0 0 42 42" fill="none"><path d="M8 31 Q11 28 11 22 V17 Q11 7 21 7 Q31 7 31 17 V22 Q31 28 34 31 Z" stroke="#ced0d6" stroke-width="2.4" stroke-linejoin="round"/><path d="M17 35 Q21 39 25 35" stroke="#ced0d6" stroke-width="2.4" fill="none"/></svg>
<div style="left:2908px;top:178px;width:15px;height:15px;border-radius:50%;background:#db5c5c"></div>
<svg style="position:absolute;left:2883px;top:258px;" width="38" height="40" viewBox="0 0 38 40" fill="none"><ellipse cx="19" cy="8" rx="15" ry="5" stroke="#ced0d6" stroke-width="2.4"/><path d="M4 8 V32 Q4 37 19 37 Q34 37 34 32 V8 M4 16 Q4 21 19 21 Q34 21 34 16 M4 24 Q4 29 19 29 Q34 29 34 24" stroke="#ced0d6" stroke-width="2.4" fill="none"/></svg>
<svg style="position:absolute;left:2883px;top:339px;" width="38" height="38" viewBox="0 0 38 38" fill="none"><defs><linearGradient id="cg" x1="0" y1="0" x2="0" y2="1"><stop offset="0" stop-color="#1aa8ff"/><stop offset="1" stop-color="#0a5fff"/></linearGradient></defs><path d="M19 2 A17 16.5 0 1 1 10 33 L3 35 L6 28 A17 16.5 0 0 1 19 2 Z" fill="url(#cg)"/><circle cx="15" cy="18.5" r="2" fill="#111"/><circle cx="23" cy="18.5" r="2" fill="#111"/></svg>
<svg style="position:absolute;left:2883px;top:419px;" width="38" height="38" viewBox="0 0 40 40" fill="none"><circle cx="26.99" cy="26.29" r="10.2" fill="#fff"/><circle cx="18.05" cy="29.19" r="10.2" fill="#fff"/><circle cx="11.06" cy="22.90" r="10.2" fill="#fff"/><circle cx="13.01" cy="13.71" r="10.2" fill="#fff"/><circle cx="21.95" cy="10.81" r="10.2" fill="#fff"/><circle cx="28.94" cy="17.10" r="10.2" fill="#fff"/><circle cx="26.99" cy="26.29" r="9" fill="#111"/><circle cx="18.05" cy="29.19" r="9" fill="#111"/><circle cx="11.06" cy="22.90" r="9" fill="#111"/><circle cx="13.01" cy="13.71" r="9" fill="#111"/><circle cx="21.95" cy="10.81" r="9" fill="#111"/><circle cx="28.94" cy="17.10" r="9" fill="#111"/><circle cx="26.99" cy="26.29" r="7.9" fill="#fff"/><circle cx="18.05" cy="29.19" r="7.9" fill="#fff"/><circle cx="11.06" cy="22.90" r="7.9" fill="#fff"/><circle cx="13.01" cy="13.71" r="7.9" fill="#fff"/><circle cx="21.95" cy="10.81" r="7.9" fill="#fff"/><circle cx="28.94" cy="17.10" r="7.9" fill="#fff"/><circle cx="20" cy="20" r="9" fill="#fff"/><path d="M15.24 15.72 L21.33 13.74 L31.32 10.50" stroke="#111" stroke-width="1.5" fill="none"/><path d="M21.33 13.74 L26.09 18.02 L33.89 25.05" stroke="#111" stroke-width="1.5" fill="none"/><path d="M26.09 18.02 L24.76 24.28 L22.57 34.55" stroke="#111" stroke-width="1.5" fill="none"/><path d="M24.76 24.28 L18.67 26.26 L8.68 29.50" stroke="#111" stroke-width="1.5" fill="none"/><path d="M18.67 26.26 L13.91 21.98 L6.11 14.95" stroke="#111" stroke-width="1.5" fill="none"/><path d="M13.91 21.98 L15.24 15.72 L17.43 5.45" stroke="#111" stroke-width="1.5" fill="none"/></svg>
<svg style="position:absolute;left:2881.0px;top:499.0px;" width="42.0" height="38.0" viewBox="0 0 42 38" fill="none"><path d="M2 24 Q2 17 8 15 H34 Q40 17 40 24 Q38 33 21 36 Q4 33 2 24 Z" fill="#ced0d6"/><path d="M9 18 H33 V28 Q27 32 21 32 Q15 32 9 28 Z" fill="#27282b"/><rect x="6" y="2" width="14.5" height="15" rx="6.5" stroke="#ced0d6" stroke-width="3.3" fill="#27282b"/><rect x="21.5" y="2" width="14.5" height="15" rx="6.5" stroke="#ced0d6" stroke-width="3.3" fill="#27282b"/><rect x="15" y="21.5" width="4" height="7" rx="2" fill="#ced0d6"/><rect x="23.5" y="21.5" width="4" height="7" rx="2" fill="#ced0d6"/></svg>
<svg style="position:absolute;left:2881.0px;top:579.0px;" width="42.0" height="38.0" viewBox="0 0 42 38" fill="none"><path d="M2 24 Q2 17 8 15 H34 Q40 17 40 24 Q38 33 21 36 Q4 33 2 24 Z" fill="#ced0d6"/><path d="M9 18 H33 V28 Q27 32 21 32 Q15 32 9 28 Z" fill="#27282b"/><rect x="6" y="2" width="14.5" height="15" rx="6.5" stroke="#ced0d6" stroke-width="3.3" fill="#27282b"/><rect x="21.5" y="2" width="14.5" height="15" rx="6.5" stroke="#ced0d6" stroke-width="3.3" fill="#27282b"/><rect x="15" y="21.5" width="4" height="7" rx="2" fill="#ced0d6"/><rect x="19.5" y="17" width="23" height="19" rx="4" fill="#27282b"/><rect x="21.6" y="19" width="18.6" height="14.4" rx="3.5" fill="#ced0d6"/><path d="M29 32 L35.6 37.6 L35.2 32 Z" fill="#ced0d6"/></svg>
<svg style="position:absolute;left:2884px;top:659.7142857142857px;" width="43.42857142857143" height="32.57142857142857" viewBox="0 0 32 24" fill="none"><path d="M4 21.5 L8.5 4 M7.6 8 Q10.5 3.5 14 3.5 Q18.5 3.5 17.5 8.5 L14.5 21.5 M17.5 8.5 Q20.5 3.5 24 3.5 Q28.5 3.5 27.5 8.5 L24.5 21.5" stroke="#a8abb0" stroke-width="3" stroke-linecap="round" stroke-linejoin="round" fill="none"/></svg>
<div style="left:140px;top:2184px;width:15px;height:15px;background:transparent;border:2.2px solid #548af7;border-radius:3px;box-sizing:border-box"></div>
<div class="t" style="left:164px;top:2178.99px;font-family:'Liberation Sans', sans-serif;font-size:26px;line-height:26px;color:#a0a3a8;font-weight:400;letter-spacing:1.6px;;-webkit-text-stroke:0.3px currentColor">WebTest</div>
<div class="t" style="left:323px;top:2178.99px;font-family:'Liberation Sans', sans-serif;font-size:26px;line-height:26px;color:#a0a3a8;font-weight:400;letter-spacing:0.8px;;-webkit-text-stroke:0.3px currentColor">src</div>
<div class="t" style="left:409px;top:2178.99px;font-family:'Liberation Sans', sans-serif;font-size:26px;line-height:26px;color:#a0a3a8;font-weight:400;letter-spacing:0.8px;;-webkit-text-stroke:0.3px currentColor">main</div>
<div class="t" style="left:517px;top:2178.99px;font-family:'Liberation Sans', sans-serif;font-size:26px;line-height:26px;color:#a0a3a8;font-weight:400;letter-spacing:0.8px;;-webkit-text-stroke:0.3px currentColor">java</div>
<div class="t" style="left:616px;top:2178.99px;font-family:'Liberation Sans', sans-serif;font-size:26px;line-height:26px;color:#a0a3a8;font-weight:400;letter-spacing:0.8px;;-webkit-text-stroke:0.3px currentColor">com</div>
<div class="t" style="left:717px;top:2178.99px;font-family:'Liberation Sans', sans-serif;font-size:26px;line-height:26px;color:#a0a3a8;font-weight:400;letter-spacing:0.8px;;-webkit-text-stroke:0.3px currentColor">example</div>
<div class="t" style="left:868px;top:2178.99px;font-family:'Liberation Sans', sans-serif;font-size:26px;line-height:26px;color:#a0a3a8;font-weight:400;letter-spacing:0.8px;;-webkit-text-stroke:0.3px currentColor">webtest</div>
<svg style="position:absolute;left:293.5px;top:2182.0px;" width="11.0" height="18" viewBox="0 0 11.0 18" fill="none"><path d="M2 2 L9.0 9.0 L2 16" stroke="#a0a3a8" stroke-width="2" stroke-linecap="round" stroke-linejoin="round"/></svg>
<svg style="position:absolute;left:379.5px;top:2182.0px;" width="11.0" height="18" viewBox="0 0 11.0 18" fill="none"><path d="M2 2 L9.0 9.0 L2 16" stroke="#a0a3a8" stroke-width="2" stroke-linecap="round" stroke-linejoin="round"/></svg>
<svg style="position:absolute;left:487.5px;top:2182.0px;" width="11.0" height="18" viewBox="0 0 11.0 18" fill="none"><path d="M2 2 L9.0 9.0 L2 16" stroke="#a0a3a8" stroke-width="2" stroke-linecap="round" stroke-linejoin="round"/></svg>
<svg style="position:absolute;left:585.5px;top:2182.0px;" width="11.0" height="18" viewBox="0 0 11.0 18" fill="none"><path d="M2 2 L9.0 9.0 L2 16" stroke="#a0a3a8" stroke-width="2" stroke-linecap="round" stroke-linejoin="round"/></svg>
<svg style="position:absolute;left:686.5px;top:2182.0px;" width="11.0" height="18" viewBox="0 0 11.0 18" fill="none"><path d="M2 2 L9.0 9.0 L2 16" stroke="#a0a3a8" stroke-width="2" stroke-linecap="round" stroke-linejoin="round"/></svg>
<svg style="position:absolute;left:839.5px;top:2182.0px;" width="11.0" height="18" viewBox="0 0 11.0 18" fill="none"><path d="M2 2 L9.0 9.0 L2 16" stroke="#a0a3a8" stroke-width="2" stroke-linecap="round" stroke-linejoin="round"/></svg>
<svg style="position:absolute;left:989.5px;top:2182.0px;" width="11.0" height="18" viewBox="0 0 11.0 18" fill="none"><path d="M2 2 L9.0 9.0 L2 16" stroke="#a0a3a8" stroke-width="2" stroke-linecap="round" stroke-linejoin="round"/></svg>
<svg style="position:absolute;left:1022px;top:2177.0px;" width="28" height="28" viewBox="0 0 28 28" fill="none"><circle cx="14.0" cy="14.0" r="12.4" stroke="#548af7" stroke-width="2.2"/><path d="M19.5 9.5 A6.2 6.2 0 1 0 19.5 18.5" stroke="#548af7" stroke-width="2.2" fill="none"/></svg>
<div class="t" style="left:1060px;top:2178.99px;font-family:'Liberation Sans', sans-serif;font-size:26px;line-height:26px;color:#a0a3a8;font-weight:400;letter-spacing:0.65px;;-webkit-text-stroke:0.3px currentColor">HelloServlet</div>
<svg style="position:absolute;left:2304px;top:2179px;" width="26" height="26" viewBox="0 0 40 40" fill="none"><circle cx="26.99" cy="26.29" r="10.2" fill="#fff"/><circle cx="18.05" cy="29.19" r="10.2" fill="#fff"/><circle cx="11.06" cy="22.90" r="10.2" fill="#fff"/><circle cx="13.01" cy="13.71" r="10.2" fill="#fff"/><circle cx="21.95" cy="10.81" r="10.2" fill="#fff"/><circle cx="28.94" cy="17.10" r="10.2" fill="#fff"/><circle cx="26.99" cy="26.29" r="9" fill="#111"/><circle cx="18.05" cy="29.19" r="9" fill="#111"/><circle cx="11.06" cy="22.90" r="9" fill="#111"/><circle cx="13.01" cy="13.71" r="9" fill="#111"/><circle cx="21.95" cy="10.81" r="9" fill="#111"/><circle cx="28.94" cy="17.10" r="9" fill="#111"/><circle cx="26.99" cy="26.29" r="7.9" fill="#fff"/><circle cx="18.05" cy="29.19" r="7.9" fill="#fff"/><circle cx="11.06" cy="22.90" r="7.9" fill="#fff"/><circle cx="13.01" cy="13.71" r="7.9" fill="#fff"/><circle cx="21.95" cy="10.81" r="7.9" fill="#fff"/><circle cx="28.94" cy="17.10" r="7.9" fill="#fff"/><circle cx="20" cy="20" r="9" fill="#fff"/><path d="M15.24 15.72 L21.33 13.74 L31.32 10.50" stroke="#111" stroke-width="1.5" fill="none"/><path d="M21.33 13.74 L26.09 18.02 L33.89 25.05" stroke="#111" stroke-width="1.5" fill="none"/><path d="M26.09 18.02 L24.76 24.28 L22.57 34.55" stroke="#111" stroke-width="1.5" fill="none"/><path d="M24.76 24.28 L18.67 26.26 L8.68 29.50" stroke="#111" stroke-width="1.5" fill="none"/><path d="M18.67 26.26 L13.91 21.98 L6.11 14.95" stroke="#111" stroke-width="1.5" fill="none"/><path d="M13.91 21.98 L15.24 15.72 L17.43 5.45" stroke="#111" stroke-width="1.5" fill="none"/></svg>
<svg style="position:absolute;left:2363px;top:2176px;" width="30" height="32" viewBox="0 0 30 32" fill="none"><defs><linearGradient id="vg" x1="0" y1="0" x2="1" y2="1"><stop offset="0" stop-color="#22d36b"/><stop offset="1" stop-color="#1a7bea"/></linearGradient></defs><path d="M2 3 H9 L12 22 L21 3 H28 L13 30 H6 Z" fill="url(#vg)"/></svg>
<div class="t" style="left:2425px;top:2178.99px;font-family:'Liberation Sans', sans-serif;font-size:26px;line-height:26px;color:#a0a3a8;font-weight:400;letter-spacing:0.6px;;-webkit-text-stroke:0.3px currentColor">7:1</div>
<div class="t" style="left:2492px;top:2178.99px;font-family:'Liberation Sans', sans-serif;font-size:26px;line-height:26px;color:#a0a3a8;font-weight:400;letter-spacing:0.6px;;-webkit-text-stroke:0.3px currentColor">LF</div>
<div class="t" style="left:2554px;top:2178.99px;font-family:'Liberation Sans', sans-serif;font-size:26px;line-height:26px;color:#a0a3a8;font-weight:400;letter-spacing:0.7px;;-webkit-text-stroke:0.3px currentColor">UTF-8</div>
<svg style="position:absolute;left:2666.88px;top:2178.32px;" width="30.24" height="27.36" viewBox="0 0 42 38" fill="none"><path d="M2 24 Q2 17 8 15 H34 Q40 17 40 24 Q38 33 21 36 Q4 33 2 24 Z" fill="#a0a3a8"/><path d="M9 18 H33 V28 Q27 32 21 32 Q15 32 9 28 Z" fill="#27282b"/><rect x="6" y="2" width="14.5" height="15" rx="6.5" stroke="#a0a3a8" stroke-width="3.3" fill="#27282b"/><rect x="21.5" y="2" width="14.5" height="15" rx="6.5" stroke="#a0a3a8" stroke-width="3.3" fill="#27282b"/><rect x="15" y="21.5" width="4" height="7" rx="2" fill="#a0a3a8"/><rect x="23.5" y="21.5" width="4" height="7" rx="2" fill="#a0a3a8"/></svg>
<div class="t" style="left:2730px;top:2178.99px;font-family:'Liberation Sans', sans-serif;font-size:26px;line-height:26px;color:#a0a3a8;font-weight:400;letter-spacing:0.7px;;-webkit-text-stroke:0.3px currentColor">4 spaces</div>
<svg style="position:absolute;left:2876px;top:2174px;" width="34" height="36" viewBox="0 0 34 36" fill="none"><rect x="3" y="16" width="19" height="16" rx="3" stroke="#a0a3a8" stroke-width="2.2"/><path d="M12.5 21.5 V26" stroke="#a0a3a8" stroke-width="2.4"/><path d="M16 16 V10 Q16 4 22 4 Q28 4 28 10 V13" stroke="#a0a3a8" stroke-width="2.2" fill="none"/></svg>
</div>
<div style="left:112px;top:76px;width:2826px;height:2142px;border:2px solid #54575b;border-radius:22px;pointer-events:none"></div>
</div></body></html>
